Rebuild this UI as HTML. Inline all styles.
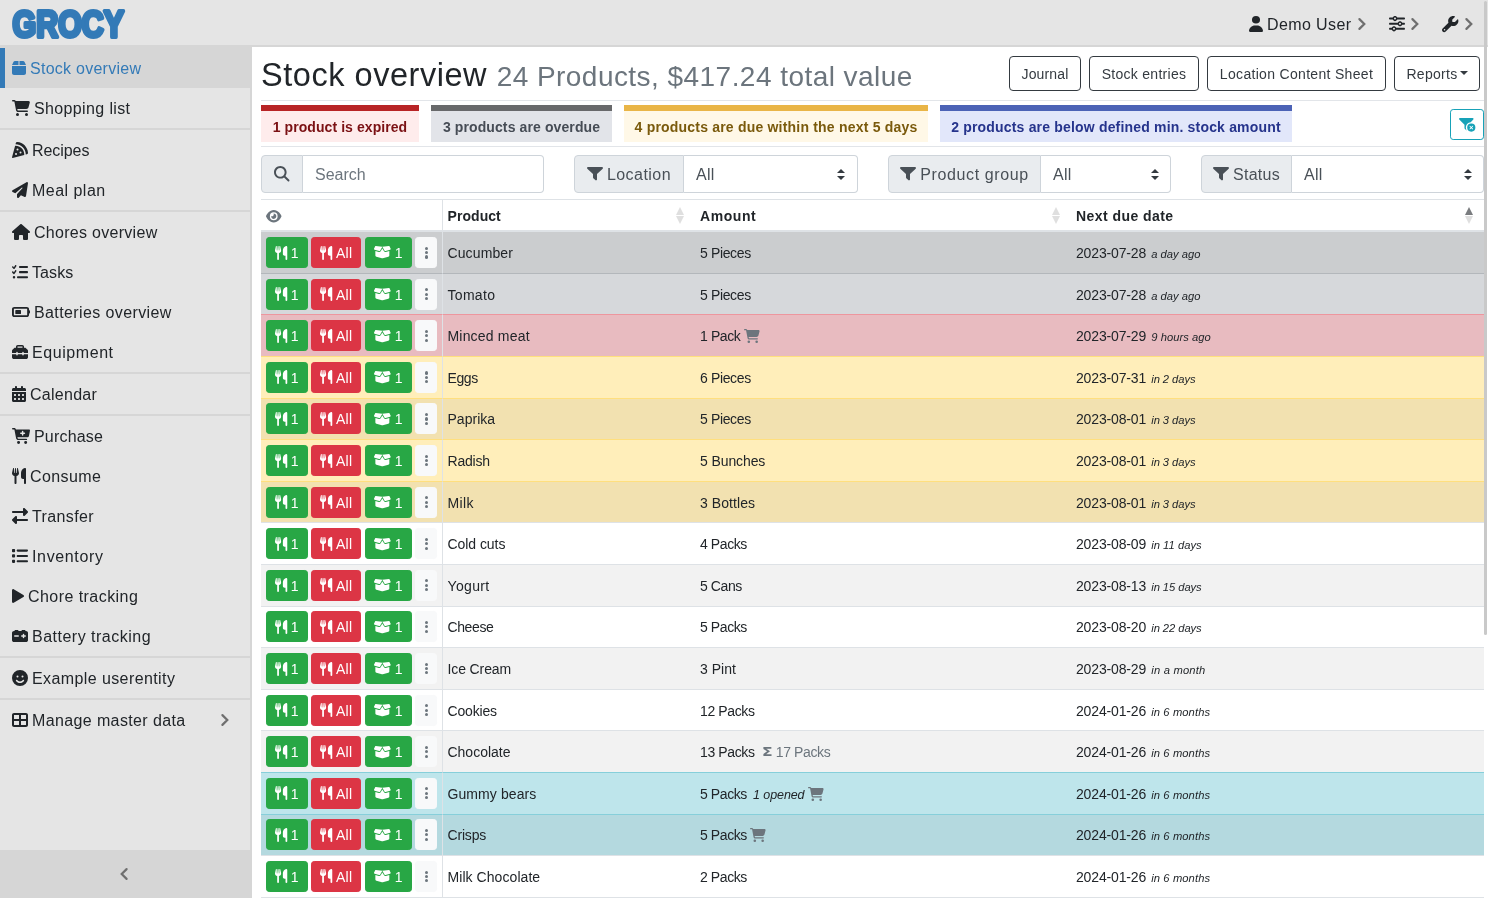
<!DOCTYPE html>
<html lang="en"><head><meta charset="utf-8"><title>Stock overview | grocy</title>
<style>
*{box-sizing:border-box;margin:0;padding:0}
html,body{width:1488px;height:898px;overflow:hidden;background:#fff}
body{will-change:transform;font-family:"Liberation Sans",sans-serif;font-size:16px;line-height:1.5;color:#212529;position:relative}
a{text-decoration:none;color:inherit}
.x{position:relative;top:.6px}
svg.i{overflow:visible;display:block;fill:currentColor;flex:none}
/* top bar */
.top{position:absolute;left:0;top:0;width:1488px;height:45px;background:#e5e5e5}
.line{position:absolute;left:0;top:45px;width:1488px;height:2px;background:#d6d6d6}
.logo{position:absolute;left:0;top:0}
.logo text{font-family:"Liberation Sans",sans-serif;font-weight:bold;font-size:36.5px;fill:#337ab7;stroke:#337ab7;stroke-width:4px;stroke-linejoin:round}
.tr span{position:absolute}
svg.cv{position:absolute;fill:none;stroke:#6f6f6f;stroke-width:2.2px;stroke-linecap:round;overflow:visible}
.ti{top:0;height:48px;display:flex;align-items:center}
.tt{left:1267px;top:.6px;height:48px;line-height:48px;font-size:16px;color:#212529;white-space:nowrap}
.chv{top:19.3px;width:8.3px;height:8.3px;border-top:2px solid #6f6f6f;border-right:2px solid #6f6f6f;transform:rotate(45deg)}
/* sidebar */
.side{position:absolute;left:0;top:45px;width:250px;height:853px;background:#e5e5e5;border-right:0}
.side:after{content:"";position:absolute;left:250px;top:0;width:2px;height:853px;background:#d6d6d6}
.sel-top{height:3px;background:#d6d6d6}
.nl{display:flex;align-items:center;height:40px;padding-left:12px;font-size:16px;color:#212529;position:relative;white-space:nowrap}
.nl .ib{display:flex;align-items:center;justify-content:flex-start;margin-right:4px;height:16px}
.nl.act{background:#d6d6d6;color:#337ab7;border-left:5px solid #337ab7;padding-left:7px}
.dv{height:2px;background:#d6d6d6}
.chev-r{position:absolute;left:219.25px;top:15.75px;width:8.5px;height:8.5px;border-top:2px solid #6f6f6f;border-right:2px solid #6f6f6f;transform:rotate(45deg)}
.tog{position:absolute;left:0;top:805px;width:250px;height:48px;background:#d6d6d6}
.chev-l{position:absolute;left:122.45px;top:19.75px;width:8.5px;height:8.5px;border-bottom:2px solid #6f6f6f;border-left:2px solid #6f6f6f;transform:rotate(45deg)}
/* main */
main{position:absolute;left:261px;top:47px;width:1223px;height:851px}
.hdr{position:absolute;left:0;top:0;width:1223px;height:53px}
h2{position:absolute;left:0;top:8.7px;font-size:32.5px;font-weight:normal;line-height:38px;white-space:nowrap;color:#212529}
.sub{margin-left:.56px;font-size:28px;color:#6c757d}
.btns{position:absolute;right:4px;top:9px;display:flex}
.ob{display:block;height:35px;line-height:33px;border:1px solid #343a40;border-radius:4px;color:#343a40;font-size:14px;text-align:center;margin-left:8px;white-space:nowrap}
.caret{display:inline-block;width:0;height:0;border-top:4.2px solid #343a40;border-left:4.2px solid transparent;border-right:4.2px solid transparent;vertical-align:3px;margin-left:2px}
.hr{position:absolute;left:0;width:1223px;height:1px;background:#e2e5e9}
.msgs{position:absolute;left:0;top:58px;width:1223px;height:37px}
.msg{position:absolute;top:0;height:36.6px;border-top:6px solid;font-size:14px;font-weight:bold;line-height:30px;padding-top:.5px;text-align:center;white-space:nowrap}
.m-err{border-color:#b82426;background:#feecec;color:#7b1114}
.m-sec{border-color:#68696b;background:#e2e4e9;color:#464c55}
.m-war{border-color:#e9b547;background:#fff8e7;color:#7a5a0c}
.m-inf{border-color:#4c63b6;background:#e2e7fa;color:#26348c}
.clr{position:absolute;left:1189px;top:4px;width:34px;height:31px;border:1px solid #17a2b8;border-radius:3.2px;color:#17a2b8;display:flex;align-items:center;justify-content:center}
.filters{position:absolute;left:0;top:108px;width:1223px;height:38px}
.ig{position:absolute;top:0;width:283px;height:38px;display:flex;font-size:16px}
.pre{display:flex;align-items:center;justify-content:center;height:38px;background:#e9ecef;border:1px solid #ced4da;border-radius:4px 0 0 4px;color:#495057;flex:none;white-space:nowrap}
.pre .pt{margin-left:4px}
.inp{flex:1;height:38px;border:1px solid #ced4da;border-left:0;border-radius:0 4px 4px 0;line-height:36px;padding-left:12px;color:#495057;background:#fff;position:relative}
.ph{color:#6c757d}
.ar{position:absolute;right:11.4px;top:12.5px;width:8px;height:11px}
.ar:before,.ar:after{content:"";position:absolute;left:0;border-left:4px solid transparent;border-right:4px solid transparent}
.ar:before{top:0;border-bottom:4.4px solid #343a40}
.ar:after{bottom:0;border-top:4.4px solid #343a40}
/* table */
.tbl{position:absolute;left:0;top:151.7px;width:1223px;border-collapse:separate;border-spacing:0;table-layout:fixed;font-size:14px;line-height:21px;color:#212529}
.tbl th,.tbl td{padding:4.8px;border-top:1px solid #dee2e6;vertical-align:middle;white-space:nowrap;text-align:left;overflow:hidden}
.tbl th{font-size:14px;line-height:21px;font-weight:bold;border-bottom:2px solid #dee2e6;position:relative}
.c0{width:181.7px;border-right:1px solid #dee2e6}
.tbl tr td.c0{border-right-color:#dee2e6}
.tbl tbody tr:first-child td{border-top:0}
.tbl tbody tr:last-child td{border-bottom:1px solid #dee2e6}
.c1{width:252.5px}.c2{width:376px}
th.c0 svg{margin-left:0.3px;position:relative;top:.8px}
.tbl th .x{top:1.4px}
.tbl td .x{top:.95px}
.eye{color:#6c757d}
.so{position:absolute;right:9.4px;top:7.4px;width:9px;height:17px}
.so:before,.so:after{content:"";position:absolute;left:-.5px;border-left:4.9px solid transparent;border-right:4.9px solid transparent}
.so:before{top:0;border-bottom:8px solid #dfdfdf}
.so:after{top:8.6px;border-top:8px solid #dfdfdf}
.so.asc:before{border-bottom-color:#7a7c7f}
tr.o td{box-shadow:inset 0 0 0 9999px rgba(0,0,0,.05)}
tr.sec td{background:#d6d8db;border-color:#b3b7bb}
tr.dan td{background:#f5c6cb;border-color:#ed969e}
tr.war td{background:#ffeeba;border-color:#ffdf7e}
tr.inf td{background:#bee5eb;border-color:#86cfda}
td.c0{font-size:0}
.b{display:inline-flex;align-items:center;height:31px;padding:0 8px;border:1px solid;border-radius:3.2px;font-size:14px;line-height:21px;color:#fff;margin-right:3.49px;vertical-align:middle}
.b>span{margin-left:3.64px}
.b.g{background:#28a745;border-color:#28a745;width:41.9px}
.b.r{background:#dc3545;border-color:#dc3545;width:50.1px}
.b.b3{width:47.1px}
.b.b3 svg{margin:0 .4px}
.b.l{background:#f8f9fa;border-color:#f8f9fa;width:21.5px;margin-right:0;color:#212529;justify-content:center;padding:0}
.b .dots{margin:0;display:block;width:3.1px}
.dots i{display:block;width:3.1px;height:3.1px;border-radius:50%;background:#6c757d;margin:0 0 1.3px}
.dots i:last-child{margin:0}
.sm{font-size:11.2px;line-height:1}
.op{font-size:12.5px;line-height:1}.it{font-style:italic}
.mut{color:#6c757d}
.sm2{margin-left:3.41px}
.sig{margin-right:1.1px}
.rel{margin-left:1.21px}
.op{margin-left:2.31px}
svg.ci{margin-left:3.5px}
.sig{font-family:"DejaVu Sans","Liberation Sans",sans-serif;font-weight:bold;font-size:13px;line-height:1;display:inline-block;transform:scaleX(1.2);transform-origin:0 50%}
svg.ci{display:inline-block;vertical-align:-3px;color:#6c757d}
.sbar{position:absolute;left:1483.6px;top:1px;width:3.4px;height:633.7px;background:#c9c9c9;border-radius:2px}

</style></head>
<body>
<nav class="top">
 <svg class="logo" width="130" height="45" viewBox="0 0 130 45"><text x="12.6" y="36.8" textLength="111.5" lengthAdjust="spacingAndGlyphs">GROCY</text></svg>
 <div class="tr">
  <span class="ti" style="left:1249px"><svg class="i" width="14" height="16" viewBox="16 8 416.0 504" preserveAspectRatio="none"><path d="M224 248a120 120 0 1 0 0-240 120 120 0 1 0 0 240m-29.7 56C95.8 304 16 383.8 16 482.3c0 16.4 13.3 29.7 29.7 29.7h356.6c16.4 0 29.7-13.3 29.7-29.7 0-98.5-79.8-178.3-178.3-178.3z"/></svg></span><span class="x tt" style="letter-spacing:0.399px">Demo User</span><svg class="cv" style="left:1356.89px;top:17px" width="10" height="14" viewBox="0 0 10 14"><polyline points="2.4,2.1 7.3,7 2.4,11.9"/></svg>
  <span class="ti" style="left:1389px;top:-.6px"><svg class="i" width="16" height="15.4" viewBox="0 16 512 480" preserveAspectRatio="none"><path d="M0 416c0 17.7 14.3 32 32 32l54.7 0c12.3 28.3 40.5 48 73.3 48s61-19.7 73.3-48L480 448c17.7 0 32-14.3 32-32s-14.3-32-32-32l-246.7 0c-12.3-28.3-40.5-48-73.3-48s-61 19.7-73.3 48L32 384c-17.7 0-32 14.3-32 32zm128 0a32 32 0 1 1 64 0 32 32 0 1 1 -64 0zM320 256a32 32 0 1 1 64 0 32 32 0 1 1 -64 0zm32-80c-32.8 0-61 19.7-73.3 48L32 224c-17.7 0-32 14.3-32 32s14.3 32 32 32l246.7 0c12.3 28.3 40.5 48 73.3 48s61-19.7 73.3-48l54.7 0c17.7 0 32-14.3 32-32s-14.3-32-32-32l-54.7 0c-12.3-28.3-40.5-48-73.3-48zM192 128a32 32 0 1 1 0-64 32 32 0 1 1 0 64zm73.3-64C253 35.7 224.8 16 192 16s-61 19.7-73.3 48L32 64C14.3 64 0 78.3 0 96s14.3 32 32 32l86.7 0c12.3 28.3 40.5 48 73.3 48s61-19.7 73.3-48L480 128c17.7 0 32-14.3 32-32s-14.3-32-32-32L265.3 64z"/></svg></span><svg class="cv" style="left:1410.39px;top:17px" width="10" height="14" viewBox="0 0 10 14"><polyline points="2.4,2.1 7.3,7 2.4,11.9"/></svg>
  <span class="ti" style="left:1442px"><svg class="i" width="16.4" height="16.2" viewBox="0 0 512 512" preserveAspectRatio="none"><path d="M352 320c88.4 0 160-71.6 160-160c0-15.3-2.2-30.1-6.2-44.2c-3.1-10.8-16.4-13.2-24.3-5.3l-76.8 76.8c-3 3-7.1 4.7-11.3 4.7H336c-8.8 0-16-7.2-16-16V118.6c0-4.2 1.7-8.3 4.7-11.3l76.8-76.8c7.9-7.9 5.4-21.2-5.3-24.3C382.1 2.2 367.3 0 352 0C263.6 0 192 71.6 192 160c0 19.1 3.4 37.5 9.5 54.5L19.9 396.1C7.2 408.8 0 426.1 0 444.1C0 481.6 30.4 512 67.9 512c18 0 35.3-7.2 48-19.9L297.5 310.5c17 6.2 35.4 9.5 54.5 9.5zM80 408a24 24 0 1 1 0 48 24 24 0 1 1 0-48z"/></svg></span><svg class="cv" style="left:1464.09px;top:17px" width="10" height="14" viewBox="0 0 10 14"><polyline points="2.4,2.1 7.3,7 2.4,11.9"/></svg>
 </div>
</nav>
<div class="line"></div>
<div class="side">
<div class="sel-top"></div>
<a class="nl act"><span class="ib" style="width:14px"><svg class="i" width="14" height="14" viewBox="0 32 448 448" preserveAspectRatio="none"><path d="M50.7 58.5L0 160H208V32H93.7C75.5 32 58.9 42.3 50.7 58.5zM240 160H448L397.3 58.5C389.1 42.3 372.5 32 354.3 32H240V160zm208 32H0V416c0 35.3 28.7 64 64 64H384c35.3 0 64-28.7 64-64V192z"/></svg></span><span class="x t" style="letter-spacing:0.263px">Stock overview</span></a>
<a class="nl"><span class="ib" style="width:18px"><svg class="i" width="17.85" height="16" viewBox="0 0 571.1 512" preserveAspectRatio="none"><path d="M0 24C0 10.7 10.7 0 24 0H69.5c22 0 41.5 12.8 50.6 32h411c26.3 0 45.5 25 38.6 50.4l-41 152.3c-8.5 31.4-37 53.3-69.5 53.3H170.7l5.4 28.5c2.2 11.3 12.1 19.5 23.6 19.5H488c13.3 0 24 10.7 24 24s-10.7 24-24 24H199.7c-34.6 0-64.3-24.6-70.7-58.5L77.4 54.5c-.7-3.8-4-6.5-7.9-6.5H24C10.7 48 0 37.3 0 24zM128 464a48 48 0 1 1 96 0 48 48 0 1 1 -96 0zm336-48a48 48 0 1 1 0 96 48 48 0 1 1 0-96z"/></svg></span><span class="x t" style="letter-spacing:0.371px">Shopping list</span></a>
<div class="dv"></div>
<a class="nl"><span class="ib" style="width:16px"><svg class="i" width="16" height="16" viewBox="-0.1 0.8 511.3 511.2" preserveAspectRatio="none"><path d="M169.7.9c-22.8-1.6-41.9 14-47.5 34.7L112.5 72c180.8.3 327.2 146.7 327.5 327.5l36.4-9.7c20.8-5.5 36.3-24.7 34.7-47.5C498.5 159.5 352.5 13.5 169.7.9m222 411.5c.2-4.1.3-8.2.3-12.4 0-154.6-125.4-280-280-280-4.1 0-8.3.1-12.4.3L.5 491.9c-1.5 5.5.1 11.4 4.1 15.4s9.9 5.6 15.4 4.1l371.6-99.1zM176 208a32 32 0 1 1 0 64 32 32 0 1 1 0-64m64 128a32 32 0 1 1 64 0 32 32 0 1 1-64 0M96 384a32 32 0 1 1 64 0 32 32 0 1 1-64 0"/></svg></span><span class="x t" style="letter-spacing:-0.071px">Recipes</span></a>
<a class="nl"><span class="ib" style="width:16px"><svg class="i" width="16" height="16" viewBox="-0.0 -0.0 512.0 512.1" preserveAspectRatio="none"><path d="M498.1 5.6c10.1 7 15.4 19.1 13.5 31.2l-64 416c-1.5 9.7-7.4 18.2-16 23s-18.9 5.4-28 1.6L284 427.7l-68.5 74.1c-8.9 9.7-22.9 12.9-35.2 8.1S160 493.2 160 480V396.4c0-4 1.5-7.8 4.2-10.7L331.8 202.8c5.8-6.3 5.6-16-.4-22s-15.7-6.4-22-.7L106 360.8 17.7 316.6C7.1 311.3 .3 300.7 0 288.9s5.9-22.8 16.1-28.7l448-256c10.7-6.1 23.9-5.5 34 1.4z"/></svg></span><span class="x t" style="letter-spacing:0.474px">Meal plan</span></a>
<div class="dv"></div>
<a class="nl"><span class="ib" style="width:18px"><svg class="i" width="18" height="16" viewBox="0 0 576.0 512" preserveAspectRatio="none"><path d="M575.8 255.5c0 18-15 32.1-32 32.1h-32l.7 160.2c0 2.7-.2 5.4-.5 8.1V472c0 22.1-17.9 40-40 40H456c-1.1 0-2.2 0-3.3-.1c-1.4 .1-2.8 .1-4.2 .1H416 392c-22.1 0-40-17.9-40-40V448 384c0-17.7-14.3-32-32-32H256c-17.7 0-32 14.3-32 32v64 24c0 22.1-17.9 40-40 40H160 128.1c-1.5 0-3-.1-4.5-.2c-1.2 .1-2.4 .2-3.6 .2H104c-22.1 0-40-17.9-40-40V360c0-.9 0-1.9 .1-2.8V287.6H32c-18 0-32-14-32-32.1c0-9 3-17 10-24L266.4 8c7-7 15-8 22-8s15 2 21 7L564.8 231.5c8 7 12 15 11 24z"/></svg></span><span class="x t" style="letter-spacing:0.289px">Chores overview</span></a>
<a class="nl"><span class="ib" style="width:16px"><svg class="i" width="16" height="13.5" viewBox="-0.0 31.9 512.0 424.1" preserveAspectRatio="none"><path d="M133.8 36.3c10.9 7.6 13.5 22.6 5.9 33.4l-56 80c-4.1 5.8-10.5 9.5-17.6 10.1S52 158 47 153L7 113c-9.3-9.4-9.3-24.6 0-34s24.6-9.3 34 0l19.8 19.8 39.6-56.6c7.6-10.9 22.6-13.5 33.4-5.9m0 160c10.9 7.6 13.5 22.6 5.9 33.4l-56 80c-4.1 5.8-10.5 9.5-17.6 10.1S52 318 47 313L7 273c-9.4-9.4-9.4-24.6 0-33.9s24.6-9.4 33.9 0l19.8 19.8 39.6-56.6c7.6-10.9 22.6-13.5 33.4-5.9zM224 96c0-17.7 14.3-32 32-32h224c17.7 0 32 14.3 32 32s-14.3 32-32 32H256c-17.7 0-32-14.3-32-32m0 160c0-17.7 14.3-32 32-32h224c17.7 0 32 14.3 32 32s-14.3 32-32 32H256c-17.7 0-32-14.3-32-32m-64 160c0-17.7 14.3-32 32-32h288c17.7 0 32 14.3 32 32s-14.3 32-32 32H192c-17.7 0-32-14.3-32-32m-96-40a40 40 0 1 1 0 80 40 40 0 1 1 0-80"/></svg></span><span class="x t" style="letter-spacing:0.113px">Tasks</span></a>
<a class="nl"><span class="ib" style="width:18px"><svg class="i" width="18" height="10" viewBox="32 64 608 384" preserveAspectRatio="none"><path d="M528 128c8.8 0 16 7.2 16 16v224c0 8.8-7.2 16-16 16H112c-8.8 0-16-7.2-16-16V144c0-8.8 7.2-16 16-16zM112 64c-44.2 0-80 35.8-80 80v224c0 44.2 35.8 80 80 80h416c44.2 0 80-35.8 80-80v-48c17.7 0 32-14.3 32-32v-64c0-17.7-14.3-32-32-32v-48c0-44.2-35.8-80-80-80zm56 112c-13.3 0-24 10.7-24 24v112c0 13.3 10.7 24 24 24h144c13.3 0 24-10.7 24-24V200c0-13.3-10.7-24-24-24z"/></svg></span><span class="x t" style="letter-spacing:0.388px">Batteries overview</span></a>
<a class="nl"><span class="ib" style="width:16px"><svg class="i" width="16" height="14" viewBox="0 0 512 480" preserveAspectRatio="none"><path d="M176 56v40h160V56c0-4.4-3.6-8-8-8H184c-4.4 0-8 3.6-8 8m-48 40V56c0-30.9 25.1-56 56-56h144c30.9 0 56 25.1 56 56v40h28.1c12.7 0 24.9 5.1 33.9 14.1l51.9 51.9c9 9 14.1 21.2 14.1 33.9V272H376v-16c0-13.3-10.7-24-24-24s-24 10.7-24 24v16H184v-16c0-13.3-10.7-24-24-24s-24 10.7-24 24v16H0v-76.1C0 183.2 5.1 171 14.1 162L66 110.1c9-9 21.2-14.1 33.9-14.1zM0 416v-96h136v16c0 13.3 10.7 24 24 24s24-10.7 24-24v-16h144v16c0 13.3 10.7 24 24 24s24-10.7 24-24v-16h136v96c0 35.3-28.7 64-64 64H64c-35.3 0-64-28.7-64-64"/></svg></span><span class="x t" style="letter-spacing:0.572px">Equipment</span></a>
<div class="dv"></div>
<a class="nl"><span class="ib" style="width:14px"><svg class="i" width="14" height="16" viewBox="0 0 448 512" preserveAspectRatio="none"><path d="M128 0c17.7 0 32 14.3 32 32V64H288V32c0-17.7 14.3-32 32-32s32 14.3 32 32V64h48c26.5 0 48 21.5 48 48v48H0V112C0 85.5 21.5 64 48 64H96V32c0-17.7 14.3-32 32-32zM0 192H448V464c0 26.5-21.5 48-48 48H48c-26.5 0-48-21.5-48-48V192zm64 80v32c0 8.8 7.2 16 16 16h32c8.8 0 16-7.2 16-16V272c0-8.8-7.2-16-16-16H80c-8.8 0-16 7.2-16 16zm128 0v32c0 8.8 7.2 16 16 16h32c8.8 0 16-7.2 16-16V272c0-8.8-7.2-16-16-16H208c-8.8 0-16 7.2-16 16zm144-16c-8.8 0-16 7.2-16 16v32c0 8.8 7.2 16 16 16h32c8.8 0 16-7.2 16-16V272c0-8.8-7.2-16-16-16H336zM64 400v32c0 8.8 7.2 16 16 16h32c8.8 0 16-7.2 16-16V400c0-8.8-7.2-16-16-16H80c-8.8 0-16 7.2-16 16zm144-16c-8.8 0-16 7.2-16 16v32c0 8.8 7.2 16 16 16h32c8.8 0 16-7.2 16-16V400c0-8.8-7.2-16-16-16H208zm112 16v32c0 8.8 7.2 16 16 16h32c8.8 0 16-7.2 16-16V400c0-8.8-7.2-16-16-16H336c-8.8 0-16 7.2-16 16z"/></svg></span><span class="x t" style="letter-spacing:0.266px">Calendar</span></a>
<div class="dv"></div>
<a class="nl"><span class="ib" style="width:18px"><svg class="i" width="18" height="16" viewBox="0 -16 569.5 528" preserveAspectRatio="none"><path d="M0 8C0-5.3 10.7-16 24-16h45.3c27.1 0 50.3 19.4 55.1 46l.4 2h412.7c20 0 35.1 18.2 31.4 37.9l-31.1 165.9c-5.7 30.3-32.1 52.2-62.9 52.2H171.3l5.1 28.3c2.1 11.4 12 19.7 23.6 19.7h256c13.3 0 24 10.7 24 24s-10.7 24-24 24H200.1c-34.8 0-64.6-24.9-70.8-59.1L77.2 38.6c-.7-3.8-4-6.6-7.9-6.6H24C10.7 32 0 21.3 0 8m160 456a48 48 0 1 1 96 0 48 48 0 1 1-96 0m224 0a48 48 0 1 1 96 0 48 48 0 1 1-96 0M336 78.4c-13.3 0-24 10.7-24 24V136h-33.6c-13.3 0-24 10.7-24 24s10.7 24 24 24H312v33.6c0 13.3 10.7 24 24 24s24-10.7 24-24V184h33.6c13.3 0 24-10.7 24-24s-10.7-24-24-24H360v-33.6c0-13.3-10.7-24-24-24"/></svg></span><span class="x t" style="letter-spacing:0.188px">Purchase</span></a>
<a class="nl"><span class="ib" style="width:14px"><svg class="i" width="14" height="16" viewBox="0 0 448 512" preserveAspectRatio="none"><path d="M416 0C400 0 288 32 288 176V288c0 35.3 28.7 64 64 64h32V480c0 17.7 14.3 32 32 32s32-14.3 32-32V352 240 32c0-17.7-14.3-32-32-32zM64 16C64 7.8 57.9 1 49.7 .1S34.2 4.6 32.4 12.5L2.1 148.8C.7 155.1 0 161.5 0 167.9c0 45.9 35.1 83.6 80 87.7V480c0 17.7 14.3 32 32 32s32-14.3 32-32V255.6c44.9-4.1 80-41.8 80-87.7c0-6.4-.7-12.8-2.1-19.1L191.6 12.5c-1.8-8-9.3-13.3-17.4-12.4S160 7.8 160 16V150.2c0 5.4-4.4 9.8-9.8 9.8c-5.1 0-9.3-3.9-9.8-9L127.9 14.6C127.2 6.3 120.3 0 112 0s-15.2 6.3-15.9 14.6L83.7 151c-.5 5.1-4.7 9-9.8 9c-5.4 0-9.8-4.4-9.8-9.8V16z"/></svg></span><span class="x t" style="letter-spacing:0.391px">Consume</span></a>
<a class="nl"><span class="ib" style="width:16px"><svg class="i" width="16" height="16" viewBox="-0.1 -0.1 512.1 512.1" preserveAspectRatio="none"><path d="m502.6 150.6-96 96c-9.2 9.2-22.9 11.9-34.9 6.9S352 236.9 352 224v-64H32c-17.7 0-32-14.3-32-32s14.3-32 32-32h320V32c0-12.9 7.8-24.6 19.8-29.6s25.7-2.2 34.9 6.9l96 96c12.5 12.5 12.5 32.8 0 45.3zm-397.3 352-96-96c-12.5-12.5-12.5-32.8 0-45.3l96-96c9.2-9.2 22.9-11.9 34.9-6.9S160 275.1 160 288v64h320c17.7 0 32 14.3 32 32s-14.3 32-32 32H160v64c0 12.9-7.8 24.6-19.8 29.6s-25.7 2.2-34.9-6.9z"/></svg></span><span class="x t" style="letter-spacing:0.385px">Transfer</span></a>
<a class="nl"><span class="ib" style="width:16px"><svg class="i" width="16" height="13.9" viewBox="16 48 496 416" preserveAspectRatio="none"><path d="M40 48c-13.3 0-24 10.7-24 24v48c0 13.3 10.7 24 24 24h48c13.3 0 24-10.7 24-24V72c0-13.3-10.7-24-24-24zm152 16c-17.7 0-32 14.3-32 32s14.3 32 32 32h288c17.7 0 32-14.3 32-32s-14.3-32-32-32zm0 160c-17.7 0-32 14.3-32 32s14.3 32 32 32h288c17.7 0 32-14.3 32-32s-14.3-32-32-32zm0 160c-17.7 0-32 14.3-32 32s14.3 32 32 32h288c17.7 0 32-14.3 32-32s-14.3-32-32-32zM16 232v48c0 13.3 10.7 24 24 24h48c13.3 0 24-10.7 24-24v-48c0-13.3-10.7-24-24-24H40c-13.3 0-24 10.7-24 24m24 136c-13.3 0-24 10.7-24 24v48c0 13.3 10.7 24 24 24h48c13.3 0 24-10.7 24-24v-48c0-13.3-10.7-24-24-24z"/></svg></span><span class="x t" style="letter-spacing:0.641px">Inventory</span></a>
<a class="nl"><span class="ib" style="width:12px"><svg class="i" width="12" height="14" viewBox="32 32.0 416 448.0" preserveAspectRatio="none"><path d="M91.2 36.9c-12.4-6.8-27.4-6.5-39.6.7S32 57.9 32 72v368c0 14.1 7.5 27.2 19.6 34.4s27.2 7.5 39.6.7l336-184c12.8-7 20.8-20.5 20.8-35.1s-8-28.1-20.8-35.1z"/></svg></span><span class="x t" style="letter-spacing:0.445px">Chore tracking</span></a>
<a class="nl"><span class="ib" style="width:16px"><svg class="i" width="16" height="12" viewBox="0 32 512 416" preserveAspectRatio="none"><path d="M80 64c0-17.7 14.3-32 32-32h64c17.7 0 32 14.3 32 32h96c0-17.7 14.3-32 32-32h64c17.7 0 32 14.3 32 32h16c35.3 0 64 28.7 64 64v256c0 35.3-28.7 64-64 64H64c-35.3 0-64-28.7-64-64V128c0-35.3 28.7-64 64-64zm312 120c0-13.3-10.7-24-24-24s-24 10.7-24 24v32h-32c-13.3 0-24 10.7-24 24s10.7 24 24 24h32v32c0 13.3 10.7 24 24 24s24-10.7 24-24v-32h32c13.3 0 24-10.7 24-24s-10.7-24-24-24h-32zM64 240c0 13.3 10.7 24 24 24h112c13.3 0 24-10.7 24-24s-10.7-24-24-24H88c-13.3 0-24 10.7-24 24"/></svg></span><span class="x t" style="letter-spacing:0.492px">Battery tracking</span></a>
<div class="dv"></div>
<a class="nl"><span class="ib" style="width:16px"><svg class="i" width="16" height="16" viewBox="0 0 512 512" preserveAspectRatio="none"><path d="M256 512a256 256 0 1 0 0-512 256 256 0 1 0 0 512m-90.6-190.1c20.4 28 53.4 46.1 90.6 46.1s70.2-18.1 90.6-46.1c7.8-10.7 22.8-13.1 33.5-5.3s13.1 22.8 5.3 33.5C356.3 390 309.2 416 256 416s-100.3-26-129.4-65.9c-7.8-10.7-5.4-25.7 5.3-33.5s25.7-5.4 33.5 5.3M144 208a32 32 0 1 1 64 0 32 32 0 1 1-64 0m192-32a32 32 0 1 1 0 64 32 32 0 1 1 0-64"/></svg></span><span class="x t" style="letter-spacing:0.401px">Example userentity</span></a>
<div class="dv"></div>
<a class="nl"><span class="ib" style="width:16px"><svg class="i" width="16" height="14" viewBox="0 32 512 448" preserveAspectRatio="none"><path d="M448 96V224H288V96H448zm0 192V416H288V288H448zM224 224H64V96H224V224zM64 288H224V416H64V288zM64 32C28.7 32 0 60.7 0 96V416c0 35.3 28.7 64 64 64H448c35.3 0 64-28.7 64-64V96c0-35.3-28.7-64-64-64H64z"/></svg></span><span class="x t" style="letter-spacing:0.377px">Manage master data</span><svg class="cv" style="left:220.19px;top:13px" width="10" height="14" viewBox="0 0 10 14"><polyline points="2.4,2.1 7.3,7 2.4,11.9"/></svg></a>

<div class="tog"><svg class="cv" style="left:119.41px;top:17px" width="10" height="14" viewBox="0 0 10 14"><polyline points="7.6,2.1 2.7,7 7.6,11.9"/></svg></div>
</div>
<main>
 <div class="hdr">
  <h2><span class="x" style="letter-spacing:0.535px">Stock overview</span> <span class="x sub" style="letter-spacing:0.455px">24 Products, $417.24 total value</span></h2>
  <div class="btns"><a class="ob" style="width:72px"><span class="x" style="letter-spacing:0.134px">Journal</span></a> <a class="ob" style="width:110px"><span class="x" style="letter-spacing:0.286px">Stock entries</span></a> <a class="ob" style="width:179px"><span class="x" style="letter-spacing:0.315px">Location Content Sheet</span></a> <a class="ob" style="width:86px"><span class="x" style="letter-spacing:0.315px">Reports</span><span class="caret"></span></a></div>
 </div>
 <div class="hr" style="top:53px"></div>
 <div class="msgs">
  <div class="msg m-err" style="left:0px;width:158px"><span class="x" style="letter-spacing:0.071px">1 product is expired</span></div>
  <div class="msg m-sec" style="left:170px;width:181px"><span class="x" style="letter-spacing:0.108px">3 products are overdue</span></div>
  <div class="msg m-war" style="left:363px;width:304px"><span class="x" style="letter-spacing:0.201px">4 products are due within the next 5 days</span></div>
  <div class="msg m-inf" style="left:679px;width:352px"><span class="x" style="letter-spacing:0.181px">2 products are below defined min. stock amount</span></div>
  <a class="clr"><svg class="i" width="16.4" height="13.7" viewBox="-0.1 64 576.1 480" preserveAspectRatio="none"><path d="M32 64C19.1 64 7.4 71.8 2.4 83.8s-2.2 25.7 7 34.8L192 301.3V416c0 8.5 3.4 16.6 9.4 22.6l64 64c2.5 2.5 5.3 4.5 8.3 6-21.2-30.9-33.6-68.3-33.6-108.6 0-99.4 75.5-181.1 172.3-191l90.4-90.4c9.2-9.2 11.9-22.9 6.9-34.9S492.9 64 480 64zm400 480a144 144 0 1 0 0-288 144 144 0 1 0 0 288m59.3-180.7L454.6 400l36.7 36.7c6.2 6.2 6.2 16.4 0 22.6s-16.4 6.2-22.6 0L432 422.6l-36.7 36.7c-6.2 6.2-16.4 6.2-22.6 0s-6.2-16.4 0-22.6l36.7-36.7-36.7-36.7c-6.2-6.2-6.2-16.4 0-22.6s16.4-6.2 22.6 0l36.7 36.7 36.7-36.7c6.2-6.2 16.4-6.2 22.6 0s6.2 16.4 0 22.6"/></svg></a>
 </div>
 <div class="hr" style="top:99px"></div>
 <div class="filters">
  <div class="ig" style="left:0"><span class="pre" style="width:42px"><svg class="i" width="15.5" height="15.5" viewBox="0 0 512.0 512.1" preserveAspectRatio="none"><path d="M416 208c0 45.9-14.9 88.3-40 122.7l126.6 126.7c12.5 12.5 12.5 32.8 0 45.3s-32.8 12.5-45.3 0L330.7 376c-34.4 25.1-76.8 40-122.7 40C93.1 416 0 322.9 0 208S93.1 0 208 0s208 93.1 208 208M208 352a144 144 0 1 0 0-288 144 144 0 1 0 0 288"/></svg></span> <span class="inp ph"><span class="x" style="letter-spacing:-0.01px">Search</span></span></div>
  <div class="ig" style="left:313px;width:283.6px"><span class="pre" style="width:110px"><svg class="i fi" width="16" height="13.4" viewBox="-0.1 64 512.0 448.0" preserveAspectRatio="none"><path d="M32 64C19.1 64 7.4 71.8 2.4 83.8s-2.2 25.7 7 34.8L192 301.3V416c0 8.5 3.4 16.6 9.4 22.6l64 64c9.2 9.2 22.9 11.9 34.9 6.9S320 492.9 320 480V301.3l182.6-182.6c9.2-9.2 11.9-22.9 6.9-34.9S492.9 64 480 64z"/></svg><span class="x pt" style="letter-spacing:0.463px">Location</span></span> <span class="inp sel"><span class="x" style="letter-spacing:0.234px">All</span><i class="ar"></i></span></div>
  <div class="ig" style="left:627px"><span class="pre" style="width:153px"><svg class="i fi" width="16" height="13.4" viewBox="-0.1 64 512.0 448.0" preserveAspectRatio="none"><path d="M32 64C19.1 64 7.4 71.8 2.4 83.8s-2.2 25.7 7 34.8L192 301.3V416c0 8.5 3.4 16.6 9.4 22.6l64 64c9.2 9.2 22.9 11.9 34.9 6.9S320 492.9 320 480V301.3l182.6-182.6c9.2-9.2 11.9-22.9 6.9-34.9S492.9 64 480 64z"/></svg><span class="x pt" style="letter-spacing:0.617px">Product group</span></span> <span class="inp sel"><span class="x" style="letter-spacing:0.234px">All</span><i class="ar"></i></span></div>
  <div class="ig" style="left:940px"><span class="pre" style="width:91px"><svg class="i fi" width="16" height="13.4" viewBox="-0.1 64 512.0 448.0" preserveAspectRatio="none"><path d="M32 64C19.1 64 7.4 71.8 2.4 83.8s-2.2 25.7 7 34.8L192 301.3V416c0 8.5 3.4 16.6 9.4 22.6l64 64c9.2 9.2 22.9 11.9 34.9 6.9S320 492.9 320 480V301.3l182.6-182.6c9.2-9.2 11.9-22.9 6.9-34.9S492.9 64 480 64z"/></svg><span class="x pt" style="letter-spacing:0.253px">Status</span></span> <span class="inp sel"><span class="x" style="letter-spacing:0.234px">All</span><i class="ar"></i></span></div>
 </div>
 <table class="tbl">
  <thead><tr><th class="c0"><svg class="i eye" width="15.5" height="12.5" viewBox="-0.1 32 576.1 448" preserveAspectRatio="none"><path d="M288 32c-80.8 0-145.5 36.8-192.6 80.6-46.8 43.5-78.1 95.4-93 131.1-3.3 7.9-3.3 16.7 0 24.6 14.9 35.7 46.2 87.7 93 131.1C142.5 443.1 207.2 480 288 480s145.5-36.8 192.6-80.6c46.8-43.5 78.1-95.4 93-131.1 3.3-7.9 3.3-16.7 0-24.6-14.9-35.7-46.2-87.7-93-131.1C433.5 68.9 368.8 32 288 32M144 256a144 144 0 1 1 288 0 144 144 0 1 1-288 0m144-64c0 35.3-28.7 64-64 64-11.5 0-22.3-3-31.7-8.4-1 10.9-.1 22.1 2.9 33.2 13.7 51.2 66.4 81.6 117.6 67.9s81.6-66.4 67.9-117.6c-12.2-45.7-55.5-74.8-101.1-70.8 5.3 9.3 8.4 20.1 8.4 31.7"/></svg></th> <th class="c1"><span class="x" style="letter-spacing:0.068px">Product</span><span class="so"></span></th> <th class="c2"><span class="x" style="letter-spacing:0.564px">Amount</span><span class="so"></span></th> <th class="c3"><span class="x" style="letter-spacing:0.444px">Next due date</span><span class="so asc"></span></th></tr></thead>
  <tbody>
<tr class="o sec"><td class="c0"><a class="b g"><svg class="i bi" width="12.25" height="14" viewBox="0 0 448 512" preserveAspectRatio="none"><path d="M416 0C400 0 288 32 288 176V288c0 35.3 28.7 64 64 64h32V480c0 17.7 14.3 32 32 32s32-14.3 32-32V352 240 32c0-17.7-14.3-32-32-32zM64 16C64 7.8 57.9 1 49.7 .1S34.2 4.6 32.4 12.5L2.1 148.8C.7 155.1 0 161.5 0 167.9c0 45.9 35.1 83.6 80 87.7V480c0 17.7 14.3 32 32 32s32-14.3 32-32V255.6c44.9-4.1 80-41.8 80-87.7c0-6.4-.7-12.8-2.1-19.1L191.6 12.5c-1.8-8-9.3-13.3-17.4-12.4S160 7.8 160 16V150.2c0 5.4-4.4 9.8-9.8 9.8c-5.1 0-9.3-3.9-9.8-9L127.9 14.6C127.2 6.3 120.3 0 112 0s-15.2 6.3-15.9 14.6L83.7 151c-.5 5.1-4.7 9-9.8 9c-5.4 0-9.8-4.4-9.8-9.8V16z"/></svg><span class="x" style="letter-spacing:0.219px">1</span></a> <a class="b r"><svg class="i bi" width="12.25" height="14" viewBox="0 0 448 512" preserveAspectRatio="none"><path d="M416 0C400 0 288 32 288 176V288c0 35.3 28.7 64 64 64h32V480c0 17.7 14.3 32 32 32s32-14.3 32-32V352 240 32c0-17.7-14.3-32-32-32zM64 16C64 7.8 57.9 1 49.7 .1S34.2 4.6 32.4 12.5L2.1 148.8C.7 155.1 0 161.5 0 167.9c0 45.9 35.1 83.6 80 87.7V480c0 17.7 14.3 32 32 32s32-14.3 32-32V255.6c44.9-4.1 80-41.8 80-87.7c0-6.4-.7-12.8-2.1-19.1L191.6 12.5c-1.8-8-9.3-13.3-17.4-12.4S160 7.8 160 16V150.2c0 5.4-4.4 9.8-9.8 9.8c-5.1 0-9.3-3.9-9.8-9L127.9 14.6C127.2 6.3 120.3 0 112 0s-15.2 6.3-15.9 14.6L83.7 151c-.5 5.1-4.7 9-9.8 9c-5.4 0-9.8-4.4-9.8-9.8V16z"/></svg><span class="x" style="letter-spacing:0.203px">All</span></a> <a class="b g b3"><svg class="i bi" width="16.7" height="12.2" viewBox="13.9 33.3 612.3 444.9" preserveAspectRatio="none"><path d="M58.9 42.1c3-6.1 9.6-9.6 16.3-8.7L320 64 564.8 33.4c6.7-.8 13.3 2.7 16.3 8.7l41.7 83.4c9 17.9-.6 39.6-19.8 45.1L439.6 217.3c-13.9 4-28.8-1.9-36.2-14.3L320 64 236.6 203c-7.4 12.4-22.3 18.3-36.2 14.3L37.1 170.6c-19.3-5.5-28.8-27.2-19.8-45.1L58.9 42.1zM321.1 128l54.9 91.4c14.9 24.8 44.6 36.6 72.5 28.6L576 211.6v167c0 22-15 41.2-36.4 46.6l-204.1 51c-10.2 2.6-20.9 2.6-31 0l-204.1-51C79 419.7 64 400.5 64 378.5v-167L191.6 248c27.8 8 57.6-3.8 72.5-28.6L318.9 128h2.2z"/></svg><span class="x" style="letter-spacing:0.219px">1</span></a> <a class="b l"><span class="dots"><i></i><i></i><i></i></span></a></td> <td class="c1"><span class="x" style="letter-spacing:0.115px">Cucumber</span></td> <td class="c2"><span class="x" style="letter-spacing:-0.359px">5 Pieces</span></td> <td class="c3"><span class="x" style="letter-spacing:-0.147px">2023-07-28</span> <span class="x sm it rel" style="letter-spacing:0.024px">a day ago</span></td></tr>
<tr class="e sec"><td class="c0"><a class="b g"><svg class="i bi" width="12.25" height="14" viewBox="0 0 448 512" preserveAspectRatio="none"><path d="M416 0C400 0 288 32 288 176V288c0 35.3 28.7 64 64 64h32V480c0 17.7 14.3 32 32 32s32-14.3 32-32V352 240 32c0-17.7-14.3-32-32-32zM64 16C64 7.8 57.9 1 49.7 .1S34.2 4.6 32.4 12.5L2.1 148.8C.7 155.1 0 161.5 0 167.9c0 45.9 35.1 83.6 80 87.7V480c0 17.7 14.3 32 32 32s32-14.3 32-32V255.6c44.9-4.1 80-41.8 80-87.7c0-6.4-.7-12.8-2.1-19.1L191.6 12.5c-1.8-8-9.3-13.3-17.4-12.4S160 7.8 160 16V150.2c0 5.4-4.4 9.8-9.8 9.8c-5.1 0-9.3-3.9-9.8-9L127.9 14.6C127.2 6.3 120.3 0 112 0s-15.2 6.3-15.9 14.6L83.7 151c-.5 5.1-4.7 9-9.8 9c-5.4 0-9.8-4.4-9.8-9.8V16z"/></svg><span class="x" style="letter-spacing:0.219px">1</span></a> <a class="b r"><svg class="i bi" width="12.25" height="14" viewBox="0 0 448 512" preserveAspectRatio="none"><path d="M416 0C400 0 288 32 288 176V288c0 35.3 28.7 64 64 64h32V480c0 17.7 14.3 32 32 32s32-14.3 32-32V352 240 32c0-17.7-14.3-32-32-32zM64 16C64 7.8 57.9 1 49.7 .1S34.2 4.6 32.4 12.5L2.1 148.8C.7 155.1 0 161.5 0 167.9c0 45.9 35.1 83.6 80 87.7V480c0 17.7 14.3 32 32 32s32-14.3 32-32V255.6c44.9-4.1 80-41.8 80-87.7c0-6.4-.7-12.8-2.1-19.1L191.6 12.5c-1.8-8-9.3-13.3-17.4-12.4S160 7.8 160 16V150.2c0 5.4-4.4 9.8-9.8 9.8c-5.1 0-9.3-3.9-9.8-9L127.9 14.6C127.2 6.3 120.3 0 112 0s-15.2 6.3-15.9 14.6L83.7 151c-.5 5.1-4.7 9-9.8 9c-5.4 0-9.8-4.4-9.8-9.8V16z"/></svg><span class="x" style="letter-spacing:0.203px">All</span></a> <a class="b g b3"><svg class="i bi" width="16.7" height="12.2" viewBox="13.9 33.3 612.3 444.9" preserveAspectRatio="none"><path d="M58.9 42.1c3-6.1 9.6-9.6 16.3-8.7L320 64 564.8 33.4c6.7-.8 13.3 2.7 16.3 8.7l41.7 83.4c9 17.9-.6 39.6-19.8 45.1L439.6 217.3c-13.9 4-28.8-1.9-36.2-14.3L320 64 236.6 203c-7.4 12.4-22.3 18.3-36.2 14.3L37.1 170.6c-19.3-5.5-28.8-27.2-19.8-45.1L58.9 42.1zM321.1 128l54.9 91.4c14.9 24.8 44.6 36.6 72.5 28.6L576 211.6v167c0 22-15 41.2-36.4 46.6l-204.1 51c-10.2 2.6-20.9 2.6-31 0l-204.1-51C79 419.7 64 400.5 64 378.5v-167L191.6 248c27.8 8 57.6-3.8 72.5-28.6L318.9 128h2.2z"/></svg><span class="x" style="letter-spacing:0.219px">1</span></a> <a class="b l"><span class="dots"><i></i><i></i><i></i></span></a></td> <td class="c1"><span class="x" style="letter-spacing:0.305px">Tomato</span></td> <td class="c2"><span class="x" style="letter-spacing:-0.359px">5 Pieces</span></td> <td class="c3"><span class="x" style="letter-spacing:-0.147px">2023-07-28</span> <span class="x sm it rel" style="letter-spacing:0.024px">a day ago</span></td></tr>
<tr class="o dan"><td class="c0"><a class="b g"><svg class="i bi" width="12.25" height="14" viewBox="0 0 448 512" preserveAspectRatio="none"><path d="M416 0C400 0 288 32 288 176V288c0 35.3 28.7 64 64 64h32V480c0 17.7 14.3 32 32 32s32-14.3 32-32V352 240 32c0-17.7-14.3-32-32-32zM64 16C64 7.8 57.9 1 49.7 .1S34.2 4.6 32.4 12.5L2.1 148.8C.7 155.1 0 161.5 0 167.9c0 45.9 35.1 83.6 80 87.7V480c0 17.7 14.3 32 32 32s32-14.3 32-32V255.6c44.9-4.1 80-41.8 80-87.7c0-6.4-.7-12.8-2.1-19.1L191.6 12.5c-1.8-8-9.3-13.3-17.4-12.4S160 7.8 160 16V150.2c0 5.4-4.4 9.8-9.8 9.8c-5.1 0-9.3-3.9-9.8-9L127.9 14.6C127.2 6.3 120.3 0 112 0s-15.2 6.3-15.9 14.6L83.7 151c-.5 5.1-4.7 9-9.8 9c-5.4 0-9.8-4.4-9.8-9.8V16z"/></svg><span class="x" style="letter-spacing:0.219px">1</span></a> <a class="b r"><svg class="i bi" width="12.25" height="14" viewBox="0 0 448 512" preserveAspectRatio="none"><path d="M416 0C400 0 288 32 288 176V288c0 35.3 28.7 64 64 64h32V480c0 17.7 14.3 32 32 32s32-14.3 32-32V352 240 32c0-17.7-14.3-32-32-32zM64 16C64 7.8 57.9 1 49.7 .1S34.2 4.6 32.4 12.5L2.1 148.8C.7 155.1 0 161.5 0 167.9c0 45.9 35.1 83.6 80 87.7V480c0 17.7 14.3 32 32 32s32-14.3 32-32V255.6c44.9-4.1 80-41.8 80-87.7c0-6.4-.7-12.8-2.1-19.1L191.6 12.5c-1.8-8-9.3-13.3-17.4-12.4S160 7.8 160 16V150.2c0 5.4-4.4 9.8-9.8 9.8c-5.1 0-9.3-3.9-9.8-9L127.9 14.6C127.2 6.3 120.3 0 112 0s-15.2 6.3-15.9 14.6L83.7 151c-.5 5.1-4.7 9-9.8 9c-5.4 0-9.8-4.4-9.8-9.8V16z"/></svg><span class="x" style="letter-spacing:0.203px">All</span></a> <a class="b g b3"><svg class="i bi" width="16.7" height="12.2" viewBox="13.9 33.3 612.3 444.9" preserveAspectRatio="none"><path d="M58.9 42.1c3-6.1 9.6-9.6 16.3-8.7L320 64 564.8 33.4c6.7-.8 13.3 2.7 16.3 8.7l41.7 83.4c9 17.9-.6 39.6-19.8 45.1L439.6 217.3c-13.9 4-28.8-1.9-36.2-14.3L320 64 236.6 203c-7.4 12.4-22.3 18.3-36.2 14.3L37.1 170.6c-19.3-5.5-28.8-27.2-19.8-45.1L58.9 42.1zM321.1 128l54.9 91.4c14.9 24.8 44.6 36.6 72.5 28.6L576 211.6v167c0 22-15 41.2-36.4 46.6l-204.1 51c-10.2 2.6-20.9 2.6-31 0l-204.1-51C79 419.7 64 400.5 64 378.5v-167L191.6 248c27.8 8 57.6-3.8 72.5-28.6L318.9 128h2.2z"/></svg><span class="x" style="letter-spacing:0.219px">1</span></a> <a class="b l"><span class="dots"><i></i><i></i><i></i></span></a></td> <td class="c1"><span class="x" style="letter-spacing:0.193px">Minced meat</span></td> <td class="c2"><span class="x" style="letter-spacing:-0.388px">1 Pack</span><svg class="i ci" width="15.6" height="14" viewBox="0 0 571.1 512" preserveAspectRatio="none"><path d="M0 24C0 10.7 10.7 0 24 0H69.5c22 0 41.5 12.8 50.6 32h411c26.3 0 45.5 25 38.6 50.4l-41 152.3c-8.5 31.4-37 53.3-69.5 53.3H170.7l5.4 28.5c2.2 11.3 12.1 19.5 23.6 19.5H488c13.3 0 24 10.7 24 24s-10.7 24-24 24H199.7c-34.6 0-64.3-24.6-70.7-58.5L77.4 54.5c-.7-3.8-4-6.5-7.9-6.5H24C10.7 48 0 37.3 0 24zM128 464a48 48 0 1 1 96 0 48 48 0 1 1 -96 0zm336-48a48 48 0 1 1 0 96 48 48 0 1 1 0-96z"/></svg></td> <td class="c3"><span class="x" style="letter-spacing:-0.147px">2023-07-29</span> <span class="x sm it rel" style="letter-spacing:0.051px">9 hours ago</span></td></tr>
<tr class="e war"><td class="c0"><a class="b g"><svg class="i bi" width="12.25" height="14" viewBox="0 0 448 512" preserveAspectRatio="none"><path d="M416 0C400 0 288 32 288 176V288c0 35.3 28.7 64 64 64h32V480c0 17.7 14.3 32 32 32s32-14.3 32-32V352 240 32c0-17.7-14.3-32-32-32zM64 16C64 7.8 57.9 1 49.7 .1S34.2 4.6 32.4 12.5L2.1 148.8C.7 155.1 0 161.5 0 167.9c0 45.9 35.1 83.6 80 87.7V480c0 17.7 14.3 32 32 32s32-14.3 32-32V255.6c44.9-4.1 80-41.8 80-87.7c0-6.4-.7-12.8-2.1-19.1L191.6 12.5c-1.8-8-9.3-13.3-17.4-12.4S160 7.8 160 16V150.2c0 5.4-4.4 9.8-9.8 9.8c-5.1 0-9.3-3.9-9.8-9L127.9 14.6C127.2 6.3 120.3 0 112 0s-15.2 6.3-15.9 14.6L83.7 151c-.5 5.1-4.7 9-9.8 9c-5.4 0-9.8-4.4-9.8-9.8V16z"/></svg><span class="x" style="letter-spacing:0.219px">1</span></a> <a class="b r"><svg class="i bi" width="12.25" height="14" viewBox="0 0 448 512" preserveAspectRatio="none"><path d="M416 0C400 0 288 32 288 176V288c0 35.3 28.7 64 64 64h32V480c0 17.7 14.3 32 32 32s32-14.3 32-32V352 240 32c0-17.7-14.3-32-32-32zM64 16C64 7.8 57.9 1 49.7 .1S34.2 4.6 32.4 12.5L2.1 148.8C.7 155.1 0 161.5 0 167.9c0 45.9 35.1 83.6 80 87.7V480c0 17.7 14.3 32 32 32s32-14.3 32-32V255.6c44.9-4.1 80-41.8 80-87.7c0-6.4-.7-12.8-2.1-19.1L191.6 12.5c-1.8-8-9.3-13.3-17.4-12.4S160 7.8 160 16V150.2c0 5.4-4.4 9.8-9.8 9.8c-5.1 0-9.3-3.9-9.8-9L127.9 14.6C127.2 6.3 120.3 0 112 0s-15.2 6.3-15.9 14.6L83.7 151c-.5 5.1-4.7 9-9.8 9c-5.4 0-9.8-4.4-9.8-9.8V16z"/></svg><span class="x" style="letter-spacing:0.203px">All</span></a> <a class="b g b3"><svg class="i bi" width="16.7" height="12.2" viewBox="13.9 33.3 612.3 444.9" preserveAspectRatio="none"><path d="M58.9 42.1c3-6.1 9.6-9.6 16.3-8.7L320 64 564.8 33.4c6.7-.8 13.3 2.7 16.3 8.7l41.7 83.4c9 17.9-.6 39.6-19.8 45.1L439.6 217.3c-13.9 4-28.8-1.9-36.2-14.3L320 64 236.6 203c-7.4 12.4-22.3 18.3-36.2 14.3L37.1 170.6c-19.3-5.5-28.8-27.2-19.8-45.1L58.9 42.1zM321.1 128l54.9 91.4c14.9 24.8 44.6 36.6 72.5 28.6L576 211.6v167c0 22-15 41.2-36.4 46.6l-204.1 51c-10.2 2.6-20.9 2.6-31 0l-204.1-51C79 419.7 64 400.5 64 378.5v-167L191.6 248c27.8 8 57.6-3.8 72.5-28.6L318.9 128h2.2z"/></svg><span class="x" style="letter-spacing:0.219px">1</span></a> <a class="b l"><span class="dots"><i></i><i></i><i></i></span></a></td> <td class="c1"><span class="x" style="letter-spacing:-0.371px">Eggs</span></td> <td class="c2"><span class="x" style="letter-spacing:-0.359px">6 Pieces</span></td> <td class="c3"><span class="x" style="letter-spacing:-0.147px">2023-07-31</span> <span class="x sm it rel" style="letter-spacing:-0.059px">in 2 days</span></td></tr>
<tr class="o war"><td class="c0"><a class="b g"><svg class="i bi" width="12.25" height="14" viewBox="0 0 448 512" preserveAspectRatio="none"><path d="M416 0C400 0 288 32 288 176V288c0 35.3 28.7 64 64 64h32V480c0 17.7 14.3 32 32 32s32-14.3 32-32V352 240 32c0-17.7-14.3-32-32-32zM64 16C64 7.8 57.9 1 49.7 .1S34.2 4.6 32.4 12.5L2.1 148.8C.7 155.1 0 161.5 0 167.9c0 45.9 35.1 83.6 80 87.7V480c0 17.7 14.3 32 32 32s32-14.3 32-32V255.6c44.9-4.1 80-41.8 80-87.7c0-6.4-.7-12.8-2.1-19.1L191.6 12.5c-1.8-8-9.3-13.3-17.4-12.4S160 7.8 160 16V150.2c0 5.4-4.4 9.8-9.8 9.8c-5.1 0-9.3-3.9-9.8-9L127.9 14.6C127.2 6.3 120.3 0 112 0s-15.2 6.3-15.9 14.6L83.7 151c-.5 5.1-4.7 9-9.8 9c-5.4 0-9.8-4.4-9.8-9.8V16z"/></svg><span class="x" style="letter-spacing:0.219px">1</span></a> <a class="b r"><svg class="i bi" width="12.25" height="14" viewBox="0 0 448 512" preserveAspectRatio="none"><path d="M416 0C400 0 288 32 288 176V288c0 35.3 28.7 64 64 64h32V480c0 17.7 14.3 32 32 32s32-14.3 32-32V352 240 32c0-17.7-14.3-32-32-32zM64 16C64 7.8 57.9 1 49.7 .1S34.2 4.6 32.4 12.5L2.1 148.8C.7 155.1 0 161.5 0 167.9c0 45.9 35.1 83.6 80 87.7V480c0 17.7 14.3 32 32 32s32-14.3 32-32V255.6c44.9-4.1 80-41.8 80-87.7c0-6.4-.7-12.8-2.1-19.1L191.6 12.5c-1.8-8-9.3-13.3-17.4-12.4S160 7.8 160 16V150.2c0 5.4-4.4 9.8-9.8 9.8c-5.1 0-9.3-3.9-9.8-9L127.9 14.6C127.2 6.3 120.3 0 112 0s-15.2 6.3-15.9 14.6L83.7 151c-.5 5.1-4.7 9-9.8 9c-5.4 0-9.8-4.4-9.8-9.8V16z"/></svg><span class="x" style="letter-spacing:0.203px">All</span></a> <a class="b g b3"><svg class="i bi" width="16.7" height="12.2" viewBox="13.9 33.3 612.3 444.9" preserveAspectRatio="none"><path d="M58.9 42.1c3-6.1 9.6-9.6 16.3-8.7L320 64 564.8 33.4c6.7-.8 13.3 2.7 16.3 8.7l41.7 83.4c9 17.9-.6 39.6-19.8 45.1L439.6 217.3c-13.9 4-28.8-1.9-36.2-14.3L320 64 236.6 203c-7.4 12.4-22.3 18.3-36.2 14.3L37.1 170.6c-19.3-5.5-28.8-27.2-19.8-45.1L58.9 42.1zM321.1 128l54.9 91.4c14.9 24.8 44.6 36.6 72.5 28.6L576 211.6v167c0 22-15 41.2-36.4 46.6l-204.1 51c-10.2 2.6-20.9 2.6-31 0l-204.1-51C79 419.7 64 400.5 64 378.5v-167L191.6 248c27.8 8 57.6-3.8 72.5-28.6L318.9 128h2.2z"/></svg><span class="x" style="letter-spacing:0.219px">1</span></a> <a class="b l"><span class="dots"><i></i><i></i><i></i></span></a></td> <td class="c1"><span class="x" style="letter-spacing:0.029px">Paprika</span></td> <td class="c2"><span class="x" style="letter-spacing:-0.359px">5 Pieces</span></td> <td class="c3"><span class="x" style="letter-spacing:-0.147px">2023-08-01</span> <span class="x sm it rel" style="letter-spacing:-0.059px">in 3 days</span></td></tr>
<tr class="e war"><td class="c0"><a class="b g"><svg class="i bi" width="12.25" height="14" viewBox="0 0 448 512" preserveAspectRatio="none"><path d="M416 0C400 0 288 32 288 176V288c0 35.3 28.7 64 64 64h32V480c0 17.7 14.3 32 32 32s32-14.3 32-32V352 240 32c0-17.7-14.3-32-32-32zM64 16C64 7.8 57.9 1 49.7 .1S34.2 4.6 32.4 12.5L2.1 148.8C.7 155.1 0 161.5 0 167.9c0 45.9 35.1 83.6 80 87.7V480c0 17.7 14.3 32 32 32s32-14.3 32-32V255.6c44.9-4.1 80-41.8 80-87.7c0-6.4-.7-12.8-2.1-19.1L191.6 12.5c-1.8-8-9.3-13.3-17.4-12.4S160 7.8 160 16V150.2c0 5.4-4.4 9.8-9.8 9.8c-5.1 0-9.3-3.9-9.8-9L127.9 14.6C127.2 6.3 120.3 0 112 0s-15.2 6.3-15.9 14.6L83.7 151c-.5 5.1-4.7 9-9.8 9c-5.4 0-9.8-4.4-9.8-9.8V16z"/></svg><span class="x" style="letter-spacing:0.219px">1</span></a> <a class="b r"><svg class="i bi" width="12.25" height="14" viewBox="0 0 448 512" preserveAspectRatio="none"><path d="M416 0C400 0 288 32 288 176V288c0 35.3 28.7 64 64 64h32V480c0 17.7 14.3 32 32 32s32-14.3 32-32V352 240 32c0-17.7-14.3-32-32-32zM64 16C64 7.8 57.9 1 49.7 .1S34.2 4.6 32.4 12.5L2.1 148.8C.7 155.1 0 161.5 0 167.9c0 45.9 35.1 83.6 80 87.7V480c0 17.7 14.3 32 32 32s32-14.3 32-32V255.6c44.9-4.1 80-41.8 80-87.7c0-6.4-.7-12.8-2.1-19.1L191.6 12.5c-1.8-8-9.3-13.3-17.4-12.4S160 7.8 160 16V150.2c0 5.4-4.4 9.8-9.8 9.8c-5.1 0-9.3-3.9-9.8-9L127.9 14.6C127.2 6.3 120.3 0 112 0s-15.2 6.3-15.9 14.6L83.7 151c-.5 5.1-4.7 9-9.8 9c-5.4 0-9.8-4.4-9.8-9.8V16z"/></svg><span class="x" style="letter-spacing:0.203px">All</span></a> <a class="b g b3"><svg class="i bi" width="16.7" height="12.2" viewBox="13.9 33.3 612.3 444.9" preserveAspectRatio="none"><path d="M58.9 42.1c3-6.1 9.6-9.6 16.3-8.7L320 64 564.8 33.4c6.7-.8 13.3 2.7 16.3 8.7l41.7 83.4c9 17.9-.6 39.6-19.8 45.1L439.6 217.3c-13.9 4-28.8-1.9-36.2-14.3L320 64 236.6 203c-7.4 12.4-22.3 18.3-36.2 14.3L37.1 170.6c-19.3-5.5-28.8-27.2-19.8-45.1L58.9 42.1zM321.1 128l54.9 91.4c14.9 24.8 44.6 36.6 72.5 28.6L576 211.6v167c0 22-15 41.2-36.4 46.6l-204.1 51c-10.2 2.6-20.9 2.6-31 0l-204.1-51C79 419.7 64 400.5 64 378.5v-167L191.6 248c27.8 8 57.6-3.8 72.5-28.6L318.9 128h2.2z"/></svg><span class="x" style="letter-spacing:0.219px">1</span></a> <a class="b l"><span class="dots"><i></i><i></i><i></i></span></a></td> <td class="c1"><span class="x" style="letter-spacing:-0.203px">Radish</span></td> <td class="c2"><span class="x" style="letter-spacing:-0.097px">5 Bunches</span></td> <td class="c3"><span class="x" style="letter-spacing:-0.147px">2023-08-01</span> <span class="x sm it rel" style="letter-spacing:-0.059px">in 3 days</span></td></tr>
<tr class="o war"><td class="c0"><a class="b g"><svg class="i bi" width="12.25" height="14" viewBox="0 0 448 512" preserveAspectRatio="none"><path d="M416 0C400 0 288 32 288 176V288c0 35.3 28.7 64 64 64h32V480c0 17.7 14.3 32 32 32s32-14.3 32-32V352 240 32c0-17.7-14.3-32-32-32zM64 16C64 7.8 57.9 1 49.7 .1S34.2 4.6 32.4 12.5L2.1 148.8C.7 155.1 0 161.5 0 167.9c0 45.9 35.1 83.6 80 87.7V480c0 17.7 14.3 32 32 32s32-14.3 32-32V255.6c44.9-4.1 80-41.8 80-87.7c0-6.4-.7-12.8-2.1-19.1L191.6 12.5c-1.8-8-9.3-13.3-17.4-12.4S160 7.8 160 16V150.2c0 5.4-4.4 9.8-9.8 9.8c-5.1 0-9.3-3.9-9.8-9L127.9 14.6C127.2 6.3 120.3 0 112 0s-15.2 6.3-15.9 14.6L83.7 151c-.5 5.1-4.7 9-9.8 9c-5.4 0-9.8-4.4-9.8-9.8V16z"/></svg><span class="x" style="letter-spacing:0.219px">1</span></a> <a class="b r"><svg class="i bi" width="12.25" height="14" viewBox="0 0 448 512" preserveAspectRatio="none"><path d="M416 0C400 0 288 32 288 176V288c0 35.3 28.7 64 64 64h32V480c0 17.7 14.3 32 32 32s32-14.3 32-32V352 240 32c0-17.7-14.3-32-32-32zM64 16C64 7.8 57.9 1 49.7 .1S34.2 4.6 32.4 12.5L2.1 148.8C.7 155.1 0 161.5 0 167.9c0 45.9 35.1 83.6 80 87.7V480c0 17.7 14.3 32 32 32s32-14.3 32-32V255.6c44.9-4.1 80-41.8 80-87.7c0-6.4-.7-12.8-2.1-19.1L191.6 12.5c-1.8-8-9.3-13.3-17.4-12.4S160 7.8 160 16V150.2c0 5.4-4.4 9.8-9.8 9.8c-5.1 0-9.3-3.9-9.8-9L127.9 14.6C127.2 6.3 120.3 0 112 0s-15.2 6.3-15.9 14.6L83.7 151c-.5 5.1-4.7 9-9.8 9c-5.4 0-9.8-4.4-9.8-9.8V16z"/></svg><span class="x" style="letter-spacing:0.203px">All</span></a> <a class="b g b3"><svg class="i bi" width="16.7" height="12.2" viewBox="13.9 33.3 612.3 444.9" preserveAspectRatio="none"><path d="M58.9 42.1c3-6.1 9.6-9.6 16.3-8.7L320 64 564.8 33.4c6.7-.8 13.3 2.7 16.3 8.7l41.7 83.4c9 17.9-.6 39.6-19.8 45.1L439.6 217.3c-13.9 4-28.8-1.9-36.2-14.3L320 64 236.6 203c-7.4 12.4-22.3 18.3-36.2 14.3L37.1 170.6c-19.3-5.5-28.8-27.2-19.8-45.1L58.9 42.1zM321.1 128l54.9 91.4c14.9 24.8 44.6 36.6 72.5 28.6L576 211.6v167c0 22-15 41.2-36.4 46.6l-204.1 51c-10.2 2.6-20.9 2.6-31 0l-204.1-51C79 419.7 64 400.5 64 378.5v-167L191.6 248c27.8 8 57.6-3.8 72.5-28.6L318.9 128h2.2z"/></svg><span class="x" style="letter-spacing:0.219px">1</span></a> <a class="b l"><span class="dots"><i></i><i></i><i></i></span></a></td> <td class="c1"><span class="x" style="letter-spacing:0.355px">Milk</span></td> <td class="c2"><span class="x" style="letter-spacing:0.083px">3 Bottles</span></td> <td class="c3"><span class="x" style="letter-spacing:-0.147px">2023-08-01</span> <span class="x sm it rel" style="letter-spacing:-0.059px">in 3 days</span></td></tr>
<tr class="e "><td class="c0"><a class="b g"><svg class="i bi" width="12.25" height="14" viewBox="0 0 448 512" preserveAspectRatio="none"><path d="M416 0C400 0 288 32 288 176V288c0 35.3 28.7 64 64 64h32V480c0 17.7 14.3 32 32 32s32-14.3 32-32V352 240 32c0-17.7-14.3-32-32-32zM64 16C64 7.8 57.9 1 49.7 .1S34.2 4.6 32.4 12.5L2.1 148.8C.7 155.1 0 161.5 0 167.9c0 45.9 35.1 83.6 80 87.7V480c0 17.7 14.3 32 32 32s32-14.3 32-32V255.6c44.9-4.1 80-41.8 80-87.7c0-6.4-.7-12.8-2.1-19.1L191.6 12.5c-1.8-8-9.3-13.3-17.4-12.4S160 7.8 160 16V150.2c0 5.4-4.4 9.8-9.8 9.8c-5.1 0-9.3-3.9-9.8-9L127.9 14.6C127.2 6.3 120.3 0 112 0s-15.2 6.3-15.9 14.6L83.7 151c-.5 5.1-4.7 9-9.8 9c-5.4 0-9.8-4.4-9.8-9.8V16z"/></svg><span class="x" style="letter-spacing:0.219px">1</span></a> <a class="b r"><svg class="i bi" width="12.25" height="14" viewBox="0 0 448 512" preserveAspectRatio="none"><path d="M416 0C400 0 288 32 288 176V288c0 35.3 28.7 64 64 64h32V480c0 17.7 14.3 32 32 32s32-14.3 32-32V352 240 32c0-17.7-14.3-32-32-32zM64 16C64 7.8 57.9 1 49.7 .1S34.2 4.6 32.4 12.5L2.1 148.8C.7 155.1 0 161.5 0 167.9c0 45.9 35.1 83.6 80 87.7V480c0 17.7 14.3 32 32 32s32-14.3 32-32V255.6c44.9-4.1 80-41.8 80-87.7c0-6.4-.7-12.8-2.1-19.1L191.6 12.5c-1.8-8-9.3-13.3-17.4-12.4S160 7.8 160 16V150.2c0 5.4-4.4 9.8-9.8 9.8c-5.1 0-9.3-3.9-9.8-9L127.9 14.6C127.2 6.3 120.3 0 112 0s-15.2 6.3-15.9 14.6L83.7 151c-.5 5.1-4.7 9-9.8 9c-5.4 0-9.8-4.4-9.8-9.8V16z"/></svg><span class="x" style="letter-spacing:0.203px">All</span></a> <a class="b g b3"><svg class="i bi" width="16.7" height="12.2" viewBox="13.9 33.3 612.3 444.9" preserveAspectRatio="none"><path d="M58.9 42.1c3-6.1 9.6-9.6 16.3-8.7L320 64 564.8 33.4c6.7-.8 13.3 2.7 16.3 8.7l41.7 83.4c9 17.9-.6 39.6-19.8 45.1L439.6 217.3c-13.9 4-28.8-1.9-36.2-14.3L320 64 236.6 203c-7.4 12.4-22.3 18.3-36.2 14.3L37.1 170.6c-19.3-5.5-28.8-27.2-19.8-45.1L58.9 42.1zM321.1 128l54.9 91.4c14.9 24.8 44.6 36.6 72.5 28.6L576 211.6v167c0 22-15 41.2-36.4 46.6l-204.1 51c-10.2 2.6-20.9 2.6-31 0l-204.1-51C79 419.7 64 400.5 64 378.5v-167L191.6 248c27.8 8 57.6-3.8 72.5-28.6L318.9 128h2.2z"/></svg><span class="x" style="letter-spacing:0.219px">1</span></a> <a class="b l"><span class="dots"><i></i><i></i><i></i></span></a></td> <td class="c1"><span class="x" style="letter-spacing:-0.052px">Cold cuts</span></td> <td class="c2"><span class="x" style="letter-spacing:-0.413px">4 Packs</span></td> <td class="c3"><span class="x" style="letter-spacing:-0.147px">2023-08-09</span> <span class="x sm it rel" style="letter-spacing:0.023px">in 11 days</span></td></tr>
<tr class="o "><td class="c0"><a class="b g"><svg class="i bi" width="12.25" height="14" viewBox="0 0 448 512" preserveAspectRatio="none"><path d="M416 0C400 0 288 32 288 176V288c0 35.3 28.7 64 64 64h32V480c0 17.7 14.3 32 32 32s32-14.3 32-32V352 240 32c0-17.7-14.3-32-32-32zM64 16C64 7.8 57.9 1 49.7 .1S34.2 4.6 32.4 12.5L2.1 148.8C.7 155.1 0 161.5 0 167.9c0 45.9 35.1 83.6 80 87.7V480c0 17.7 14.3 32 32 32s32-14.3 32-32V255.6c44.9-4.1 80-41.8 80-87.7c0-6.4-.7-12.8-2.1-19.1L191.6 12.5c-1.8-8-9.3-13.3-17.4-12.4S160 7.8 160 16V150.2c0 5.4-4.4 9.8-9.8 9.8c-5.1 0-9.3-3.9-9.8-9L127.9 14.6C127.2 6.3 120.3 0 112 0s-15.2 6.3-15.9 14.6L83.7 151c-.5 5.1-4.7 9-9.8 9c-5.4 0-9.8-4.4-9.8-9.8V16z"/></svg><span class="x" style="letter-spacing:0.219px">1</span></a> <a class="b r"><svg class="i bi" width="12.25" height="14" viewBox="0 0 448 512" preserveAspectRatio="none"><path d="M416 0C400 0 288 32 288 176V288c0 35.3 28.7 64 64 64h32V480c0 17.7 14.3 32 32 32s32-14.3 32-32V352 240 32c0-17.7-14.3-32-32-32zM64 16C64 7.8 57.9 1 49.7 .1S34.2 4.6 32.4 12.5L2.1 148.8C.7 155.1 0 161.5 0 167.9c0 45.9 35.1 83.6 80 87.7V480c0 17.7 14.3 32 32 32s32-14.3 32-32V255.6c44.9-4.1 80-41.8 80-87.7c0-6.4-.7-12.8-2.1-19.1L191.6 12.5c-1.8-8-9.3-13.3-17.4-12.4S160 7.8 160 16V150.2c0 5.4-4.4 9.8-9.8 9.8c-5.1 0-9.3-3.9-9.8-9L127.9 14.6C127.2 6.3 120.3 0 112 0s-15.2 6.3-15.9 14.6L83.7 151c-.5 5.1-4.7 9-9.8 9c-5.4 0-9.8-4.4-9.8-9.8V16z"/></svg><span class="x" style="letter-spacing:0.203px">All</span></a> <a class="b g b3"><svg class="i bi" width="16.7" height="12.2" viewBox="13.9 33.3 612.3 444.9" preserveAspectRatio="none"><path d="M58.9 42.1c3-6.1 9.6-9.6 16.3-8.7L320 64 564.8 33.4c6.7-.8 13.3 2.7 16.3 8.7l41.7 83.4c9 17.9-.6 39.6-19.8 45.1L439.6 217.3c-13.9 4-28.8-1.9-36.2-14.3L320 64 236.6 203c-7.4 12.4-22.3 18.3-36.2 14.3L37.1 170.6c-19.3-5.5-28.8-27.2-19.8-45.1L58.9 42.1zM321.1 128l54.9 91.4c14.9 24.8 44.6 36.6 72.5 28.6L576 211.6v167c0 22-15 41.2-36.4 46.6l-204.1 51c-10.2 2.6-20.9 2.6-31 0l-204.1-51C79 419.7 64 400.5 64 378.5v-167L191.6 248c27.8 8 57.6-3.8 72.5-28.6L318.9 128h2.2z"/></svg><span class="x" style="letter-spacing:0.219px">1</span></a> <a class="b l"><span class="dots"><i></i><i></i><i></i></span></a></td> <td class="c1"><span class="x" style="letter-spacing:0.346px">Yogurt</span></td> <td class="c2"><span class="x" style="letter-spacing:-0.401px">5 Cans</span></td> <td class="c3"><span class="x" style="letter-spacing:-0.147px">2023-08-13</span> <span class="x sm it rel" style="letter-spacing:-0.059px">in 15 days</span></td></tr>
<tr class="e "><td class="c0"><a class="b g"><svg class="i bi" width="12.25" height="14" viewBox="0 0 448 512" preserveAspectRatio="none"><path d="M416 0C400 0 288 32 288 176V288c0 35.3 28.7 64 64 64h32V480c0 17.7 14.3 32 32 32s32-14.3 32-32V352 240 32c0-17.7-14.3-32-32-32zM64 16C64 7.8 57.9 1 49.7 .1S34.2 4.6 32.4 12.5L2.1 148.8C.7 155.1 0 161.5 0 167.9c0 45.9 35.1 83.6 80 87.7V480c0 17.7 14.3 32 32 32s32-14.3 32-32V255.6c44.9-4.1 80-41.8 80-87.7c0-6.4-.7-12.8-2.1-19.1L191.6 12.5c-1.8-8-9.3-13.3-17.4-12.4S160 7.8 160 16V150.2c0 5.4-4.4 9.8-9.8 9.8c-5.1 0-9.3-3.9-9.8-9L127.9 14.6C127.2 6.3 120.3 0 112 0s-15.2 6.3-15.9 14.6L83.7 151c-.5 5.1-4.7 9-9.8 9c-5.4 0-9.8-4.4-9.8-9.8V16z"/></svg><span class="x" style="letter-spacing:0.219px">1</span></a> <a class="b r"><svg class="i bi" width="12.25" height="14" viewBox="0 0 448 512" preserveAspectRatio="none"><path d="M416 0C400 0 288 32 288 176V288c0 35.3 28.7 64 64 64h32V480c0 17.7 14.3 32 32 32s32-14.3 32-32V352 240 32c0-17.7-14.3-32-32-32zM64 16C64 7.8 57.9 1 49.7 .1S34.2 4.6 32.4 12.5L2.1 148.8C.7 155.1 0 161.5 0 167.9c0 45.9 35.1 83.6 80 87.7V480c0 17.7 14.3 32 32 32s32-14.3 32-32V255.6c44.9-4.1 80-41.8 80-87.7c0-6.4-.7-12.8-2.1-19.1L191.6 12.5c-1.8-8-9.3-13.3-17.4-12.4S160 7.8 160 16V150.2c0 5.4-4.4 9.8-9.8 9.8c-5.1 0-9.3-3.9-9.8-9L127.9 14.6C127.2 6.3 120.3 0 112 0s-15.2 6.3-15.9 14.6L83.7 151c-.5 5.1-4.7 9-9.8 9c-5.4 0-9.8-4.4-9.8-9.8V16z"/></svg><span class="x" style="letter-spacing:0.203px">All</span></a> <a class="b g b3"><svg class="i bi" width="16.7" height="12.2" viewBox="13.9 33.3 612.3 444.9" preserveAspectRatio="none"><path d="M58.9 42.1c3-6.1 9.6-9.6 16.3-8.7L320 64 564.8 33.4c6.7-.8 13.3 2.7 16.3 8.7l41.7 83.4c9 17.9-.6 39.6-19.8 45.1L439.6 217.3c-13.9 4-28.8-1.9-36.2-14.3L320 64 236.6 203c-7.4 12.4-22.3 18.3-36.2 14.3L37.1 170.6c-19.3-5.5-28.8-27.2-19.8-45.1L58.9 42.1zM321.1 128l54.9 91.4c14.9 24.8 44.6 36.6 72.5 28.6L576 211.6v167c0 22-15 41.2-36.4 46.6l-204.1 51c-10.2 2.6-20.9 2.6-31 0l-204.1-51C79 419.7 64 400.5 64 378.5v-167L191.6 248c27.8 8 57.6-3.8 72.5-28.6L318.9 128h2.2z"/></svg><span class="x" style="letter-spacing:0.219px">1</span></a> <a class="b l"><span class="dots"><i></i><i></i><i></i></span></a></td> <td class="c1"><span class="x" style="letter-spacing:-0.38px">Cheese</span></td> <td class="c2"><span class="x" style="letter-spacing:-0.413px">5 Packs</span></td> <td class="c3"><span class="x" style="letter-spacing:-0.147px">2023-08-20</span> <span class="x sm it rel" style="letter-spacing:-0.059px">in 22 days</span></td></tr>
<tr class="o "><td class="c0"><a class="b g"><svg class="i bi" width="12.25" height="14" viewBox="0 0 448 512" preserveAspectRatio="none"><path d="M416 0C400 0 288 32 288 176V288c0 35.3 28.7 64 64 64h32V480c0 17.7 14.3 32 32 32s32-14.3 32-32V352 240 32c0-17.7-14.3-32-32-32zM64 16C64 7.8 57.9 1 49.7 .1S34.2 4.6 32.4 12.5L2.1 148.8C.7 155.1 0 161.5 0 167.9c0 45.9 35.1 83.6 80 87.7V480c0 17.7 14.3 32 32 32s32-14.3 32-32V255.6c44.9-4.1 80-41.8 80-87.7c0-6.4-.7-12.8-2.1-19.1L191.6 12.5c-1.8-8-9.3-13.3-17.4-12.4S160 7.8 160 16V150.2c0 5.4-4.4 9.8-9.8 9.8c-5.1 0-9.3-3.9-9.8-9L127.9 14.6C127.2 6.3 120.3 0 112 0s-15.2 6.3-15.9 14.6L83.7 151c-.5 5.1-4.7 9-9.8 9c-5.4 0-9.8-4.4-9.8-9.8V16z"/></svg><span class="x" style="letter-spacing:0.219px">1</span></a> <a class="b r"><svg class="i bi" width="12.25" height="14" viewBox="0 0 448 512" preserveAspectRatio="none"><path d="M416 0C400 0 288 32 288 176V288c0 35.3 28.7 64 64 64h32V480c0 17.7 14.3 32 32 32s32-14.3 32-32V352 240 32c0-17.7-14.3-32-32-32zM64 16C64 7.8 57.9 1 49.7 .1S34.2 4.6 32.4 12.5L2.1 148.8C.7 155.1 0 161.5 0 167.9c0 45.9 35.1 83.6 80 87.7V480c0 17.7 14.3 32 32 32s32-14.3 32-32V255.6c44.9-4.1 80-41.8 80-87.7c0-6.4-.7-12.8-2.1-19.1L191.6 12.5c-1.8-8-9.3-13.3-17.4-12.4S160 7.8 160 16V150.2c0 5.4-4.4 9.8-9.8 9.8c-5.1 0-9.3-3.9-9.8-9L127.9 14.6C127.2 6.3 120.3 0 112 0s-15.2 6.3-15.9 14.6L83.7 151c-.5 5.1-4.7 9-9.8 9c-5.4 0-9.8-4.4-9.8-9.8V16z"/></svg><span class="x" style="letter-spacing:0.203px">All</span></a> <a class="b g b3"><svg class="i bi" width="16.7" height="12.2" viewBox="13.9 33.3 612.3 444.9" preserveAspectRatio="none"><path d="M58.9 42.1c3-6.1 9.6-9.6 16.3-8.7L320 64 564.8 33.4c6.7-.8 13.3 2.7 16.3 8.7l41.7 83.4c9 17.9-.6 39.6-19.8 45.1L439.6 217.3c-13.9 4-28.8-1.9-36.2-14.3L320 64 236.6 203c-7.4 12.4-22.3 18.3-36.2 14.3L37.1 170.6c-19.3-5.5-28.8-27.2-19.8-45.1L58.9 42.1zM321.1 128l54.9 91.4c14.9 24.8 44.6 36.6 72.5 28.6L576 211.6v167c0 22-15 41.2-36.4 46.6l-204.1 51c-10.2 2.6-20.9 2.6-31 0l-204.1-51C79 419.7 64 400.5 64 378.5v-167L191.6 248c27.8 8 57.6-3.8 72.5-28.6L318.9 128h2.2z"/></svg><span class="x" style="letter-spacing:0.219px">1</span></a> <a class="b l"><span class="dots"><i></i><i></i><i></i></span></a></td> <td class="c1"><span class="x" style="letter-spacing:-0.115px">Ice Cream</span></td> <td class="c2"><span class="x" style="letter-spacing:0.021px">3 Pint</span></td> <td class="c3"><span class="x" style="letter-spacing:-0.147px">2023-08-29</span> <span class="x sm it rel" style="letter-spacing:0.205px">in a month</span></td></tr>
<tr class="e "><td class="c0"><a class="b g"><svg class="i bi" width="12.25" height="14" viewBox="0 0 448 512" preserveAspectRatio="none"><path d="M416 0C400 0 288 32 288 176V288c0 35.3 28.7 64 64 64h32V480c0 17.7 14.3 32 32 32s32-14.3 32-32V352 240 32c0-17.7-14.3-32-32-32zM64 16C64 7.8 57.9 1 49.7 .1S34.2 4.6 32.4 12.5L2.1 148.8C.7 155.1 0 161.5 0 167.9c0 45.9 35.1 83.6 80 87.7V480c0 17.7 14.3 32 32 32s32-14.3 32-32V255.6c44.9-4.1 80-41.8 80-87.7c0-6.4-.7-12.8-2.1-19.1L191.6 12.5c-1.8-8-9.3-13.3-17.4-12.4S160 7.8 160 16V150.2c0 5.4-4.4 9.8-9.8 9.8c-5.1 0-9.3-3.9-9.8-9L127.9 14.6C127.2 6.3 120.3 0 112 0s-15.2 6.3-15.9 14.6L83.7 151c-.5 5.1-4.7 9-9.8 9c-5.4 0-9.8-4.4-9.8-9.8V16z"/></svg><span class="x" style="letter-spacing:0.219px">1</span></a> <a class="b r"><svg class="i bi" width="12.25" height="14" viewBox="0 0 448 512" preserveAspectRatio="none"><path d="M416 0C400 0 288 32 288 176V288c0 35.3 28.7 64 64 64h32V480c0 17.7 14.3 32 32 32s32-14.3 32-32V352 240 32c0-17.7-14.3-32-32-32zM64 16C64 7.8 57.9 1 49.7 .1S34.2 4.6 32.4 12.5L2.1 148.8C.7 155.1 0 161.5 0 167.9c0 45.9 35.1 83.6 80 87.7V480c0 17.7 14.3 32 32 32s32-14.3 32-32V255.6c44.9-4.1 80-41.8 80-87.7c0-6.4-.7-12.8-2.1-19.1L191.6 12.5c-1.8-8-9.3-13.3-17.4-12.4S160 7.8 160 16V150.2c0 5.4-4.4 9.8-9.8 9.8c-5.1 0-9.3-3.9-9.8-9L127.9 14.6C127.2 6.3 120.3 0 112 0s-15.2 6.3-15.9 14.6L83.7 151c-.5 5.1-4.7 9-9.8 9c-5.4 0-9.8-4.4-9.8-9.8V16z"/></svg><span class="x" style="letter-spacing:0.203px">All</span></a> <a class="b g b3"><svg class="i bi" width="16.7" height="12.2" viewBox="13.9 33.3 612.3 444.9" preserveAspectRatio="none"><path d="M58.9 42.1c3-6.1 9.6-9.6 16.3-8.7L320 64 564.8 33.4c6.7-.8 13.3 2.7 16.3 8.7l41.7 83.4c9 17.9-.6 39.6-19.8 45.1L439.6 217.3c-13.9 4-28.8-1.9-36.2-14.3L320 64 236.6 203c-7.4 12.4-22.3 18.3-36.2 14.3L37.1 170.6c-19.3-5.5-28.8-27.2-19.8-45.1L58.9 42.1zM321.1 128l54.9 91.4c14.9 24.8 44.6 36.6 72.5 28.6L576 211.6v167c0 22-15 41.2-36.4 46.6l-204.1 51c-10.2 2.6-20.9 2.6-31 0l-204.1-51C79 419.7 64 400.5 64 378.5v-167L191.6 248c27.8 8 57.6-3.8 72.5-28.6L318.9 128h2.2z"/></svg><span class="x" style="letter-spacing:0.219px">1</span></a> <a class="b l"><span class="dots"><i></i><i></i><i></i></span></a></td> <td class="c1"><span class="x" style="letter-spacing:-0.167px">Cookies</span></td> <td class="c2"><span class="x" style="letter-spacing:-0.373px">12 Packs</span></td> <td class="c3"><span class="x" style="letter-spacing:-0.147px">2024-01-26</span> <span class="x sm it rel" style="letter-spacing:0.099px">in 6 months</span></td></tr>
<tr class="o "><td class="c0"><a class="b g"><svg class="i bi" width="12.25" height="14" viewBox="0 0 448 512" preserveAspectRatio="none"><path d="M416 0C400 0 288 32 288 176V288c0 35.3 28.7 64 64 64h32V480c0 17.7 14.3 32 32 32s32-14.3 32-32V352 240 32c0-17.7-14.3-32-32-32zM64 16C64 7.8 57.9 1 49.7 .1S34.2 4.6 32.4 12.5L2.1 148.8C.7 155.1 0 161.5 0 167.9c0 45.9 35.1 83.6 80 87.7V480c0 17.7 14.3 32 32 32s32-14.3 32-32V255.6c44.9-4.1 80-41.8 80-87.7c0-6.4-.7-12.8-2.1-19.1L191.6 12.5c-1.8-8-9.3-13.3-17.4-12.4S160 7.8 160 16V150.2c0 5.4-4.4 9.8-9.8 9.8c-5.1 0-9.3-3.9-9.8-9L127.9 14.6C127.2 6.3 120.3 0 112 0s-15.2 6.3-15.9 14.6L83.7 151c-.5 5.1-4.7 9-9.8 9c-5.4 0-9.8-4.4-9.8-9.8V16z"/></svg><span class="x" style="letter-spacing:0.219px">1</span></a> <a class="b r"><svg class="i bi" width="12.25" height="14" viewBox="0 0 448 512" preserveAspectRatio="none"><path d="M416 0C400 0 288 32 288 176V288c0 35.3 28.7 64 64 64h32V480c0 17.7 14.3 32 32 32s32-14.3 32-32V352 240 32c0-17.7-14.3-32-32-32zM64 16C64 7.8 57.9 1 49.7 .1S34.2 4.6 32.4 12.5L2.1 148.8C.7 155.1 0 161.5 0 167.9c0 45.9 35.1 83.6 80 87.7V480c0 17.7 14.3 32 32 32s32-14.3 32-32V255.6c44.9-4.1 80-41.8 80-87.7c0-6.4-.7-12.8-2.1-19.1L191.6 12.5c-1.8-8-9.3-13.3-17.4-12.4S160 7.8 160 16V150.2c0 5.4-4.4 9.8-9.8 9.8c-5.1 0-9.3-3.9-9.8-9L127.9 14.6C127.2 6.3 120.3 0 112 0s-15.2 6.3-15.9 14.6L83.7 151c-.5 5.1-4.7 9-9.8 9c-5.4 0-9.8-4.4-9.8-9.8V16z"/></svg><span class="x" style="letter-spacing:0.203px">All</span></a> <a class="b g b3"><svg class="i bi" width="16.7" height="12.2" viewBox="13.9 33.3 612.3 444.9" preserveAspectRatio="none"><path d="M58.9 42.1c3-6.1 9.6-9.6 16.3-8.7L320 64 564.8 33.4c6.7-.8 13.3 2.7 16.3 8.7l41.7 83.4c9 17.9-.6 39.6-19.8 45.1L439.6 217.3c-13.9 4-28.8-1.9-36.2-14.3L320 64 236.6 203c-7.4 12.4-22.3 18.3-36.2 14.3L37.1 170.6c-19.3-5.5-28.8-27.2-19.8-45.1L58.9 42.1zM321.1 128l54.9 91.4c14.9 24.8 44.6 36.6 72.5 28.6L576 211.6v167c0 22-15 41.2-36.4 46.6l-204.1 51c-10.2 2.6-20.9 2.6-31 0l-204.1-51C79 419.7 64 400.5 64 378.5v-167L191.6 248c27.8 8 57.6-3.8 72.5-28.6L318.9 128h2.2z"/></svg><span class="x" style="letter-spacing:0.219px">1</span></a> <a class="b l"><span class="dots"><i></i><i></i><i></i></span></a></td> <td class="c1"><span class="x" style="letter-spacing:-0.01px">Chocolate</span></td> <td class="c2"><span class="x" style="letter-spacing:-0.373px">13 Packs</span> <span class="mut sm2"><span class="sig">&Sigma;</span> <span class="x" style="letter-spacing:-0.373px">17 Packs</span></span></td> <td class="c3"><span class="x" style="letter-spacing:-0.147px">2024-01-26</span> <span class="x sm it rel" style="letter-spacing:0.099px">in 6 months</span></td></tr>
<tr class="e inf"><td class="c0"><a class="b g"><svg class="i bi" width="12.25" height="14" viewBox="0 0 448 512" preserveAspectRatio="none"><path d="M416 0C400 0 288 32 288 176V288c0 35.3 28.7 64 64 64h32V480c0 17.7 14.3 32 32 32s32-14.3 32-32V352 240 32c0-17.7-14.3-32-32-32zM64 16C64 7.8 57.9 1 49.7 .1S34.2 4.6 32.4 12.5L2.1 148.8C.7 155.1 0 161.5 0 167.9c0 45.9 35.1 83.6 80 87.7V480c0 17.7 14.3 32 32 32s32-14.3 32-32V255.6c44.9-4.1 80-41.8 80-87.7c0-6.4-.7-12.8-2.1-19.1L191.6 12.5c-1.8-8-9.3-13.3-17.4-12.4S160 7.8 160 16V150.2c0 5.4-4.4 9.8-9.8 9.8c-5.1 0-9.3-3.9-9.8-9L127.9 14.6C127.2 6.3 120.3 0 112 0s-15.2 6.3-15.9 14.6L83.7 151c-.5 5.1-4.7 9-9.8 9c-5.4 0-9.8-4.4-9.8-9.8V16z"/></svg><span class="x" style="letter-spacing:0.219px">1</span></a> <a class="b r"><svg class="i bi" width="12.25" height="14" viewBox="0 0 448 512" preserveAspectRatio="none"><path d="M416 0C400 0 288 32 288 176V288c0 35.3 28.7 64 64 64h32V480c0 17.7 14.3 32 32 32s32-14.3 32-32V352 240 32c0-17.7-14.3-32-32-32zM64 16C64 7.8 57.9 1 49.7 .1S34.2 4.6 32.4 12.5L2.1 148.8C.7 155.1 0 161.5 0 167.9c0 45.9 35.1 83.6 80 87.7V480c0 17.7 14.3 32 32 32s32-14.3 32-32V255.6c44.9-4.1 80-41.8 80-87.7c0-6.4-.7-12.8-2.1-19.1L191.6 12.5c-1.8-8-9.3-13.3-17.4-12.4S160 7.8 160 16V150.2c0 5.4-4.4 9.8-9.8 9.8c-5.1 0-9.3-3.9-9.8-9L127.9 14.6C127.2 6.3 120.3 0 112 0s-15.2 6.3-15.9 14.6L83.7 151c-.5 5.1-4.7 9-9.8 9c-5.4 0-9.8-4.4-9.8-9.8V16z"/></svg><span class="x" style="letter-spacing:0.203px">All</span></a> <a class="b g b3"><svg class="i bi" width="16.7" height="12.2" viewBox="13.9 33.3 612.3 444.9" preserveAspectRatio="none"><path d="M58.9 42.1c3-6.1 9.6-9.6 16.3-8.7L320 64 564.8 33.4c6.7-.8 13.3 2.7 16.3 8.7l41.7 83.4c9 17.9-.6 39.6-19.8 45.1L439.6 217.3c-13.9 4-28.8-1.9-36.2-14.3L320 64 236.6 203c-7.4 12.4-22.3 18.3-36.2 14.3L37.1 170.6c-19.3-5.5-28.8-27.2-19.8-45.1L58.9 42.1zM321.1 128l54.9 91.4c14.9 24.8 44.6 36.6 72.5 28.6L576 211.6v167c0 22-15 41.2-36.4 46.6l-204.1 51c-10.2 2.6-20.9 2.6-31 0l-204.1-51C79 419.7 64 400.5 64 378.5v-167L191.6 248c27.8 8 57.6-3.8 72.5-28.6L318.9 128h2.2z"/></svg><span class="x" style="letter-spacing:0.219px">1</span></a> <a class="b l"><span class="dots"><i></i><i></i><i></i></span></a></td> <td class="c1"><span class="x" style="letter-spacing:0.092px">Gummy bears</span></td> <td class="c2"><span class="x" style="letter-spacing:-0.413px">5 Packs</span> <span class="x it op" style="letter-spacing:-0.096px">1 opened</span><svg class="i ci" width="15.6" height="14" viewBox="0 0 571.1 512" preserveAspectRatio="none"><path d="M0 24C0 10.7 10.7 0 24 0H69.5c22 0 41.5 12.8 50.6 32h411c26.3 0 45.5 25 38.6 50.4l-41 152.3c-8.5 31.4-37 53.3-69.5 53.3H170.7l5.4 28.5c2.2 11.3 12.1 19.5 23.6 19.5H488c13.3 0 24 10.7 24 24s-10.7 24-24 24H199.7c-34.6 0-64.3-24.6-70.7-58.5L77.4 54.5c-.7-3.8-4-6.5-7.9-6.5H24C10.7 48 0 37.3 0 24zM128 464a48 48 0 1 1 96 0 48 48 0 1 1 -96 0zm336-48a48 48 0 1 1 0 96 48 48 0 1 1 0-96z"/></svg></td> <td class="c3"><span class="x" style="letter-spacing:-0.147px">2024-01-26</span> <span class="x sm it rel" style="letter-spacing:0.099px">in 6 months</span></td></tr>
<tr class="o inf"><td class="c0"><a class="b g"><svg class="i bi" width="12.25" height="14" viewBox="0 0 448 512" preserveAspectRatio="none"><path d="M416 0C400 0 288 32 288 176V288c0 35.3 28.7 64 64 64h32V480c0 17.7 14.3 32 32 32s32-14.3 32-32V352 240 32c0-17.7-14.3-32-32-32zM64 16C64 7.8 57.9 1 49.7 .1S34.2 4.6 32.4 12.5L2.1 148.8C.7 155.1 0 161.5 0 167.9c0 45.9 35.1 83.6 80 87.7V480c0 17.7 14.3 32 32 32s32-14.3 32-32V255.6c44.9-4.1 80-41.8 80-87.7c0-6.4-.7-12.8-2.1-19.1L191.6 12.5c-1.8-8-9.3-13.3-17.4-12.4S160 7.8 160 16V150.2c0 5.4-4.4 9.8-9.8 9.8c-5.1 0-9.3-3.9-9.8-9L127.9 14.6C127.2 6.3 120.3 0 112 0s-15.2 6.3-15.9 14.6L83.7 151c-.5 5.1-4.7 9-9.8 9c-5.4 0-9.8-4.4-9.8-9.8V16z"/></svg><span class="x" style="letter-spacing:0.219px">1</span></a> <a class="b r"><svg class="i bi" width="12.25" height="14" viewBox="0 0 448 512" preserveAspectRatio="none"><path d="M416 0C400 0 288 32 288 176V288c0 35.3 28.7 64 64 64h32V480c0 17.7 14.3 32 32 32s32-14.3 32-32V352 240 32c0-17.7-14.3-32-32-32zM64 16C64 7.8 57.9 1 49.7 .1S34.2 4.6 32.4 12.5L2.1 148.8C.7 155.1 0 161.5 0 167.9c0 45.9 35.1 83.6 80 87.7V480c0 17.7 14.3 32 32 32s32-14.3 32-32V255.6c44.9-4.1 80-41.8 80-87.7c0-6.4-.7-12.8-2.1-19.1L191.6 12.5c-1.8-8-9.3-13.3-17.4-12.4S160 7.8 160 16V150.2c0 5.4-4.4 9.8-9.8 9.8c-5.1 0-9.3-3.9-9.8-9L127.9 14.6C127.2 6.3 120.3 0 112 0s-15.2 6.3-15.9 14.6L83.7 151c-.5 5.1-4.7 9-9.8 9c-5.4 0-9.8-4.4-9.8-9.8V16z"/></svg><span class="x" style="letter-spacing:0.203px">All</span></a> <a class="b g b3"><svg class="i bi" width="16.7" height="12.2" viewBox="13.9 33.3 612.3 444.9" preserveAspectRatio="none"><path d="M58.9 42.1c3-6.1 9.6-9.6 16.3-8.7L320 64 564.8 33.4c6.7-.8 13.3 2.7 16.3 8.7l41.7 83.4c9 17.9-.6 39.6-19.8 45.1L439.6 217.3c-13.9 4-28.8-1.9-36.2-14.3L320 64 236.6 203c-7.4 12.4-22.3 18.3-36.2 14.3L37.1 170.6c-19.3-5.5-28.8-27.2-19.8-45.1L58.9 42.1zM321.1 128l54.9 91.4c14.9 24.8 44.6 36.6 72.5 28.6L576 211.6v167c0 22-15 41.2-36.4 46.6l-204.1 51c-10.2 2.6-20.9 2.6-31 0l-204.1-51C79 419.7 64 400.5 64 378.5v-167L191.6 248c27.8 8 57.6-3.8 72.5-28.6L318.9 128h2.2z"/></svg><span class="x" style="letter-spacing:0.219px">1</span></a> <a class="b l"><span class="dots"><i></i><i></i><i></i></span></a></td> <td class="c1"><span class="x" style="letter-spacing:-0.169px">Crisps</span></td> <td class="c2"><span class="x" style="letter-spacing:-0.413px">5 Packs</span><svg class="i ci" width="15.6" height="14" viewBox="0 0 571.1 512" preserveAspectRatio="none"><path d="M0 24C0 10.7 10.7 0 24 0H69.5c22 0 41.5 12.8 50.6 32h411c26.3 0 45.5 25 38.6 50.4l-41 152.3c-8.5 31.4-37 53.3-69.5 53.3H170.7l5.4 28.5c2.2 11.3 12.1 19.5 23.6 19.5H488c13.3 0 24 10.7 24 24s-10.7 24-24 24H199.7c-34.6 0-64.3-24.6-70.7-58.5L77.4 54.5c-.7-3.8-4-6.5-7.9-6.5H24C10.7 48 0 37.3 0 24zM128 464a48 48 0 1 1 96 0 48 48 0 1 1 -96 0zm336-48a48 48 0 1 1 0 96 48 48 0 1 1 0-96z"/></svg></td> <td class="c3"><span class="x" style="letter-spacing:-0.147px">2024-01-26</span> <span class="x sm it rel" style="letter-spacing:0.099px">in 6 months</span></td></tr>
<tr class="e "><td class="c0"><a class="b g"><svg class="i bi" width="12.25" height="14" viewBox="0 0 448 512" preserveAspectRatio="none"><path d="M416 0C400 0 288 32 288 176V288c0 35.3 28.7 64 64 64h32V480c0 17.7 14.3 32 32 32s32-14.3 32-32V352 240 32c0-17.7-14.3-32-32-32zM64 16C64 7.8 57.9 1 49.7 .1S34.2 4.6 32.4 12.5L2.1 148.8C.7 155.1 0 161.5 0 167.9c0 45.9 35.1 83.6 80 87.7V480c0 17.7 14.3 32 32 32s32-14.3 32-32V255.6c44.9-4.1 80-41.8 80-87.7c0-6.4-.7-12.8-2.1-19.1L191.6 12.5c-1.8-8-9.3-13.3-17.4-12.4S160 7.8 160 16V150.2c0 5.4-4.4 9.8-9.8 9.8c-5.1 0-9.3-3.9-9.8-9L127.9 14.6C127.2 6.3 120.3 0 112 0s-15.2 6.3-15.9 14.6L83.7 151c-.5 5.1-4.7 9-9.8 9c-5.4 0-9.8-4.4-9.8-9.8V16z"/></svg><span class="x" style="letter-spacing:0.219px">1</span></a> <a class="b r"><svg class="i bi" width="12.25" height="14" viewBox="0 0 448 512" preserveAspectRatio="none"><path d="M416 0C400 0 288 32 288 176V288c0 35.3 28.7 64 64 64h32V480c0 17.7 14.3 32 32 32s32-14.3 32-32V352 240 32c0-17.7-14.3-32-32-32zM64 16C64 7.8 57.9 1 49.7 .1S34.2 4.6 32.4 12.5L2.1 148.8C.7 155.1 0 161.5 0 167.9c0 45.9 35.1 83.6 80 87.7V480c0 17.7 14.3 32 32 32s32-14.3 32-32V255.6c44.9-4.1 80-41.8 80-87.7c0-6.4-.7-12.8-2.1-19.1L191.6 12.5c-1.8-8-9.3-13.3-17.4-12.4S160 7.8 160 16V150.2c0 5.4-4.4 9.8-9.8 9.8c-5.1 0-9.3-3.9-9.8-9L127.9 14.6C127.2 6.3 120.3 0 112 0s-15.2 6.3-15.9 14.6L83.7 151c-.5 5.1-4.7 9-9.8 9c-5.4 0-9.8-4.4-9.8-9.8V16z"/></svg><span class="x" style="letter-spacing:0.203px">All</span></a> <a class="b g b3"><svg class="i bi" width="16.7" height="12.2" viewBox="13.9 33.3 612.3 444.9" preserveAspectRatio="none"><path d="M58.9 42.1c3-6.1 9.6-9.6 16.3-8.7L320 64 564.8 33.4c6.7-.8 13.3 2.7 16.3 8.7l41.7 83.4c9 17.9-.6 39.6-19.8 45.1L439.6 217.3c-13.9 4-28.8-1.9-36.2-14.3L320 64 236.6 203c-7.4 12.4-22.3 18.3-36.2 14.3L37.1 170.6c-19.3-5.5-28.8-27.2-19.8-45.1L58.9 42.1zM321.1 128l54.9 91.4c14.9 24.8 44.6 36.6 72.5 28.6L576 211.6v167c0 22-15 41.2-36.4 46.6l-204.1 51c-10.2 2.6-20.9 2.6-31 0l-204.1-51C79 419.7 64 400.5 64 378.5v-167L191.6 248c27.8 8 57.6-3.8 72.5-28.6L318.9 128h2.2z"/></svg><span class="x" style="letter-spacing:0.219px">1</span></a> <a class="b l"><span class="dots"><i></i><i></i><i></i></span></a></td> <td class="c1"><span class="x" style="letter-spacing:0.065px">Milk Chocolate</span></td> <td class="c2"><span class="x" style="letter-spacing:-0.413px">2 Packs</span></td> <td class="c3"><span class="x" style="letter-spacing:-0.147px">2024-01-26</span> <span class="x sm it rel" style="letter-spacing:0.099px">in 6 months</span></td></tr>
  </tbody>
 </table>
</main>
<div class="sbar"></div>
</body></html>
